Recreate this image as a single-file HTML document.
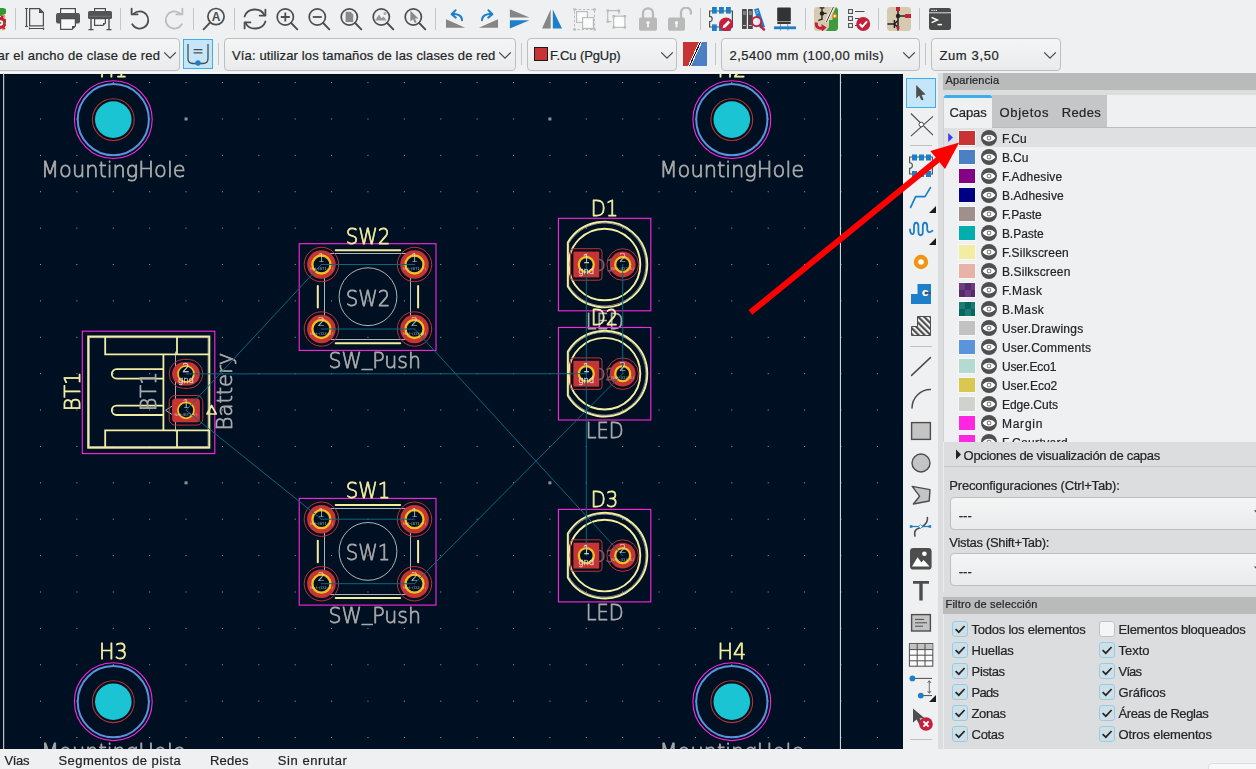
<!DOCTYPE html>
<html lang="es"><head><meta charset="utf-8"><title>Editor de placas</title>
<style>
*{box-sizing:border-box}
html,body{margin:0;padding:0}
body{width:1256px;height:769px;overflow:hidden;position:relative;background:#eff0f1;font-family:"Liberation Sans",sans-serif;font-size:13px;color:#232629}
.abs{position:absolute}
#canvas{position:absolute;left:0;top:73px;width:903px;height:676px;background:#001023;overflow:hidden}
#canvas svg{position:absolute;left:0;top:0;will-change:transform}
.sep{position:absolute;width:1px;background:#c4c6c7}
.combo{position:absolute;height:32px;top:38px;border:1px solid #bcbec0;border-radius:4px;background:linear-gradient(#f4f5f5,#eaebec);white-space:nowrap;overflow:hidden}
.combo span{position:absolute;top:8px;line-height:15px;font-size:13px;white-space:nowrap}
.ico{position:absolute}
.lbl{position:absolute;white-space:nowrap;line-height:15px;-webkit-text-stroke:0.22px #232629}

</style></head><body>
<div class="abs" style="left:0;top:72px;width:903px;height:1px;background:#f7f8f8"></div>
<svg class="ico" style="left:-18px;top:7px" width="24" height="24" viewBox="0 0 24 24"><rect x="-4" y="1" width="28.3" height="21.8" rx="3.2" fill="#f7f7f4"/><path d="M-4 7V4.2Q-4 1 -0.8 1H21.1Q24.3 1 24.3 4.2V6.2Q21 8.4 18 9.2Z" fill="#2f9a36"/><circle cx="21.4" cy="9.6" r="1.5" fill="#fff" stroke="#e39a22" stroke-width="1.1"/><circle cx="18.4" cy="16" r="4.4" fill="none" stroke="#c4203c" stroke-width="3.2"/><circle cx="18.4" cy="16" r="6.4" fill="none" stroke="#c4203c" stroke-width="2.2" stroke-dasharray="2.5 2.5"/><circle cx="18.4" cy="16" r="1.1" fill="#3aa840"/><circle cx="23.4" cy="16.4" r="0.8" fill="#3aa840"/><circle cx="21" cy="22.4" r="1" fill="#f0a020"/></svg>
<svg class="ico" style="left:24px;top:7px" width="24" height="24" viewBox="0 0 24 24"><path d="M1 1.5H4M2.5 1.5V19.5M1 19.5H4M5.5 22.5V20.5M5.5 21.5H19.5M19.5 20.5V23" fill="none" stroke="#4d4d4d" stroke-width="1.2"/><path d="M5.6 1.6H15.5L19.4 5.5V18.9H5.6Z" fill="none" stroke="#4d4d4d" stroke-width="1.2"/><path d="M15 1.6L19.4 6H15Z" fill="#4d4d4d"/></svg>
<svg class="ico" style="left:56px;top:7px" width="24" height="24" viewBox="0 0 24 24"><rect x="4.6" y="1.6" width="14.8" height="6" fill="#f7f7f7" stroke="#4d4d4d" stroke-width="1.2"/><rect x="0" y="6" width="24" height="10.5" rx="2" fill="#555"/><path d="M4.6 11.6H19.4V19L16 22.4H4.6Z" fill="#f7f7f7" stroke="#4d4d4d" stroke-width="1.2"/><path d="M16 22.4V19H19.4Z" fill="#4d4d4d"/></svg>
<svg class="ico" style="left:88px;top:7px" width="24" height="24" viewBox="0 0 24 24"><rect x="6.6" y="1.6" width="10.8" height="5" fill="#f7f7f7" stroke="#4d4d4d" stroke-width="1.2"/><rect x="0" y="4" width="24" height="8" rx="1.5" fill="#555"/><path d="M1.5 9.3H22.5" stroke="#777" stroke-width="0.8"/><path d="M6.6 11.6H17.4V16L15 18.4H6.6Z" fill="#f7f7f7" stroke="#4d4d4d" stroke-width="1.2"/><path d="M15 18.4V16H17.4Z" fill="#4d4d4d"/><path d="M3 12V22.5M21 12V22.5M0.5 22.6H5.5M18.5 22.6H23.5" stroke="#4d4d4d" stroke-width="1.4" fill="none"/></svg>
<svg class="ico" style="left:129px;top:7px" width="24" height="24" viewBox="0 0 24 24"><path d="M3.2 17.2A8.6 8.6 0 1 0 4.6 6.9" fill="none" stroke="#4d4d4d" stroke-width="1.8" stroke-linecap="round"/><path d="M2.6 1.6V7.3H8.6" fill="none" stroke="#4d4d4d" stroke-width="1.8" stroke-linecap="round" stroke-linejoin="round"/></svg>
<svg class="ico" style="left:161px;top:7px" width="24" height="24" viewBox="0 0 24 24"><g transform="translate(24 0) scale(-1 1)"><path d="M3.2 17.2A8.6 8.6 0 1 0 4.6 6.9" fill="none" stroke="#bcbcbc" stroke-width="1.8" stroke-linecap="round"/><path d="M2.6 1.6V7.3H8.6" fill="none" stroke="#bcbcbc" stroke-width="1.8" stroke-linecap="round" stroke-linejoin="round"/></g></svg>
<svg class="ico" style="left:202px;top:7px" width="24" height="24" viewBox="0 0 24 24"><circle cx="14" cy="9.6" r="8.1" fill="none" stroke="#4d4d4d" stroke-width="1.7"/><path d="M8 15.7L1.6 22.3" stroke="#4d4d4d" stroke-width="1.9" stroke-linecap="round"/><text x="14" y="14" font-size="12" font-weight="bold" text-anchor="middle" fill="#4d4d4d" font-family="Liberation Sans,sans-serif">A</text></svg>
<svg class="ico" style="left:243px;top:7px" width="24" height="24" viewBox="0 0 24 24"><path d="M1.6 9.5A10.6 9.6 0 0 1 21.5 8.2" fill="none" stroke="#4d4d4d" stroke-width="1.8" stroke-linecap="round"/><path d="M22.4 2.6V8.6H16.6" fill="none" stroke="#4d4d4d" stroke-width="1.8" stroke-linecap="round" stroke-linejoin="round"/><path d="M22.4 14.5A10.6 9.6 0 0 1 2.5 15.8" fill="none" stroke="#4d4d4d" stroke-width="1.8" stroke-linecap="round"/><path d="M1.6 21.4V15.4H7.4" fill="none" stroke="#4d4d4d" stroke-width="1.8" stroke-linecap="round" stroke-linejoin="round"/></svg>
<svg class="ico" style="left:275px;top:7px" width="24" height="24" viewBox="0 0 24 24"><circle cx="10.3" cy="10" r="8.1" fill="none" stroke="#4d4d4d" stroke-width="1.7"/><path d="M16.2 16L22.3 22.3" stroke="#4d4d4d" stroke-width="1.9" stroke-linecap="round"/><path d="M5.8 10H14.8M10.3 5.5V14.5" stroke="#4d4d4d" stroke-width="1.8"/></svg>
<svg class="ico" style="left:307px;top:7px" width="24" height="24" viewBox="0 0 24 24"><circle cx="10.3" cy="10" r="8.1" fill="none" stroke="#4d4d4d" stroke-width="1.7"/><path d="M16.2 16L22.3 22.3" stroke="#4d4d4d" stroke-width="1.9" stroke-linecap="round"/><path d="M5.8 10H14.8" stroke="#4d4d4d" stroke-width="1.8"/></svg>
<svg class="ico" style="left:339px;top:7px" width="24" height="24" viewBox="0 0 24 24"><circle cx="10.3" cy="10" r="8.1" fill="none" stroke="#4d4d4d" stroke-width="1.7"/><path d="M16.2 16L22.3 22.3" stroke="#4d4d4d" stroke-width="1.9" stroke-linecap="round"/><path d="M6.6 4.8H11.6L14.2 7.4V15H6.6Z" fill="#8a8a8a"/></svg>
<svg class="ico" style="left:371px;top:7px" width="24" height="24" viewBox="0 0 24 24"><circle cx="10.3" cy="10" r="8.1" fill="none" stroke="#4d4d4d" stroke-width="1.7"/><path d="M16.2 16L22.3 22.3" stroke="#4d4d4d" stroke-width="1.9" stroke-linecap="round"/><path d="M4 13.6L8 7.6L10.6 11.2L12.6 9.6L15.6 13.6Z" fill="#999"/><circle cx="14" cy="6.4" r="1.5" fill="#aaa"/></svg>
<svg class="ico" style="left:403px;top:7px" width="24" height="24" viewBox="0 0 24 24"><circle cx="10.3" cy="10" r="8.1" fill="none" stroke="#4d4d4d" stroke-width="1.7"/><path d="M16.2 16L22.3 22.3" stroke="#4d4d4d" stroke-width="1.9" stroke-linecap="round"/><path d="M7.4 3.6V14.6L10 12.2L11.8 16L13.6 15.2L11.9 11.5H15.4Z" fill="#8a8a8a"/></svg>
<svg class="ico" style="left:444px;top:7px" width="24" height="24" viewBox="0 0 24 24"><path d="M2 12.2V20.8H21.2Z" fill="#858585"/><path d="M18 13.2C18 9 14 6.6 9 7" fill="none" stroke="#1d7fc9" stroke-width="2" stroke-linecap="round"/><path d="M11.6 3.2L7.6 7.2L11.8 10.6" fill="none" stroke="#1d7fc9" stroke-width="2" stroke-linecap="round" stroke-linejoin="round"/></svg>
<svg class="ico" style="left:476px;top:7px" width="24" height="24" viewBox="0 0 24 24"><g transform="translate(24 0) scale(-1 1)"><path d="M2 12.2V20.8H21.2Z" fill="#858585"/><path d="M18 13.2C18 9 14 6.6 9 7" fill="none" stroke="#1d7fc9" stroke-width="2" stroke-linecap="round"/><path d="M11.6 3.2L7.6 7.2L11.8 10.6" fill="none" stroke="#1d7fc9" stroke-width="2" stroke-linecap="round" stroke-linejoin="round"/></g></svg>
<svg class="ico" style="left:508px;top:7px" width="24" height="24" viewBox="0 0 24 24"><path d="M1.9 2.3V10.6H21.5Z" fill="#858585"/><path d="M1.9 13.2H21.5L1.9 21.5Z" fill="#1d7fc9"/></svg>
<svg class="ico" style="left:540px;top:7px" width="24" height="24" viewBox="0 0 24 24"><path d="M10.7 2.5V21.5H2Z" fill="#858585"/><path d="M12.8 2.5V21.5H22Z" fill="#1d7fc9"/></svg>
<svg class="ico" style="left:572px;top:7px" width="24" height="24" viewBox="0 0 24 24"><rect x="2.5" y="2.5" width="20" height="20" fill="none" stroke="#bcbcbc" stroke-width="1" stroke-dasharray="2.5 1.7"/><rect x="1.3" y="1.3" width="2.4" height="2.4" fill="#b9b9b9"/><rect x="21.3" y="1.3" width="2.4" height="2.4" fill="#b9b9b9"/><rect x="1.3" y="21.3" width="2.4" height="2.4" fill="#b9b9b9"/><rect x="21.3" y="21.3" width="2.4" height="2.4" fill="#b9b9b9"/><rect x="4.6" y="4.6" width="10.8" height="10.8" fill="#fafafa" stroke="#bcbcbc" stroke-width="1.2"/><rect x="10.6" y="10.6" width="10.8" height="10.8" fill="#fcfcfc" stroke="#bcbcbc" stroke-width="1.2"/></svg>
<svg class="ico" style="left:604px;top:7px" width="24" height="24" viewBox="0 0 24 24"><path d="M14.9 7V3.6H3.7V14.6H7.5" fill="none" stroke="#bcbcbc" stroke-width="1.2"/><rect x="9.7" y="9.2" width="11.2" height="11.2" fill="#fcfcfc" stroke="#bcbcbc" stroke-width="1.2"/><rect x="2.5" y="2.4000000000000004" width="2.4" height="2.4" fill="#b9b9b9"/><rect x="13.700000000000001" y="2.4000000000000004" width="2.4" height="2.4" fill="#b9b9b9"/><rect x="2.5" y="13.4" width="2.4" height="2.4" fill="#b9b9b9"/><rect x="8.5" y="7.999999999999999" width="2.4" height="2.4" fill="#b9b9b9"/><rect x="19.7" y="7.999999999999999" width="2.4" height="2.4" fill="#b9b9b9"/><rect x="8.5" y="19.2" width="2.4" height="2.4" fill="#b9b9b9"/><rect x="19.7" y="19.2" width="2.4" height="2.4" fill="#b9b9b9"/></svg>
<svg class="ico" style="left:636px;top:7px" width="24" height="24" viewBox="0 0 24 24"><path d="M7 11V6.3A5 5 0 0 1 17 6.3V11" fill="none" stroke="#b9b9b9" stroke-width="2.3"/><rect x="3" y="10.4" width="18" height="13.4" rx="1.8" fill="#b9b9b9"/><circle cx="12" cy="15.8" r="1.7" fill="#f4f4f4"/><rect x="11.1" y="16" width="1.8" height="4.4" fill="#f4f4f4"/></svg>
<svg class="ico" style="left:668px;top:7px" width="24" height="24" viewBox="0 0 24 24"><path d="M13 11V5.7A5 5 0 0 1 23 5.7V7.4" fill="none" stroke="#b9b9b9" stroke-width="2.3"/><rect x="0" y="10.4" width="17" height="13.4" rx="1.8" fill="#b9b9b9"/><circle cx="8.5" cy="15.8" r="1.7" fill="#f4f4f4"/><rect x="7.6" y="16" width="1.8" height="4.4" fill="#f4f4f4"/></svg>
<svg class="ico" style="left:709px;top:7px" width="24" height="24" viewBox="0 0 24 24"><path d="M0.6 4H23.4V20H0.6V14.6A2.6 2.6 0 0 0 0.6 9.4Z" fill="none" stroke="#4d4d4d" stroke-width="1.2"/><rect x="3" y="0" width="4.8" height="6.6" fill="#1d7fc9"/><rect x="3" y="17.4" width="4.8" height="6.6" fill="#1d7fc9"/><rect x="10" y="0" width="4.8" height="6.6" fill="#1d7fc9"/><rect x="10" y="17.4" width="4.8" height="6.6" fill="#1d7fc9"/><rect x="17" y="0" width="4.8" height="6.6" fill="#1d7fc9"/><rect x="17" y="17.4" width="4.8" height="6.6" fill="#1d7fc9"/><circle cx="17" cy="17.4" r="7" fill="#c4203c"/><path d="M13.6 21.2L14.4 18.4L19.4 13.4L21.4 15.4L16.4 20.4Z" fill="#fff"/></svg>
<svg class="ico" style="left:742px;top:7px" width="24" height="24" viewBox="0 0 24 24"><rect x="0" y="2" width="4.8" height="20" rx="0.6" fill="#4a4a4a"/><rect x="6" y="2" width="4.8" height="20" rx="0.6" fill="#4a4a4a"/><path d="M1 5H3.8M1 7H3.8M1 18.5H3.8M7 5H9.8M7 7H9.8M7 18.5H9.8" stroke="#ddd" stroke-width="0.8"/><path d="M12 2.2L16.6 1L23 20L18 21.4Z" fill="#1d7fc9"/><path d="M13.6 4.2L16 3.6M14.2 6.2L16.6 5.6" stroke="#cfe4f5" stroke-width="0.8"/><circle cx="14.6" cy="14.6" r="4.6" fill="#e6f1fa" fill-opacity="0.9" stroke="#c4203c" stroke-width="1.9"/><path d="M18 18.4L22 22.6" stroke="#c4203c" stroke-width="2.4" stroke-linecap="round"/></svg>
<svg class="ico" style="left:773px;top:7px" width="24" height="24" viewBox="0 0 24 24"><path d="M5.2 0.4H16.8Q17.8 0.4 17.8 1.6V14H4.2V1.6Q4.2 0.4 5.2 0.4Z" fill="#333"/><rect x="4.2" y="14.6" width="13.6" height="2.4" rx="0.8" fill="#3a3a3a"/><path d="M7.4 17V23.6M14.8 17V23.6" stroke="#888" stroke-width="0.9"/><rect x="1" y="19.4" width="22" height="2.8" fill="#1d7fc9"/></svg>
<svg class="ico" style="left:814px;top:7px" width="24" height="24" viewBox="0 0 24 24"><rect x="0" y="0" width="24" height="24" rx="3.4" fill="#d6c9ae"/><path d="M12 24H20.6Q24 24 24 20.6V3.4Q24 1 22 0.3L18.5 7.5V13H15V20Z" fill="#3d9a3f"/><path d="M19.4 0L12.4 15" stroke="#fff" stroke-width="2.6"/><path d="M19.4 0L12.4 15" stroke="#222" stroke-width="0.9"/><circle cx="8" cy="6.4" r="2.2" fill="#222"/><path d="M8 0.4V13M5.6 0.8H10.4M8 6.4H12.4M8 12L4.4 13.6" stroke="#222" stroke-width="1.3" fill="none"/><circle cx="20.6" cy="9" r="1.8" fill="#fff" stroke="#ec8b12" stroke-width="1.4"/><path d="M2.4 15.4C1.6 20.6 5 21.6 8.6 21" fill="none" stroke="#c4203c" stroke-width="3"/><path d="M7.4 17L12.6 20.6L8 24.4Z" fill="#c4203c"/></svg>
<svg class="ico" style="left:847px;top:7px" width="24" height="24" viewBox="0 0 24 24"><rect x="1.6" y="2.6" width="3.8" height="3.8" fill="#fff" stroke="#4d4d4d" stroke-width="1.1"/><rect x="1.6" y="9.6" width="3.8" height="3.8" fill="#fff" stroke="#4d4d4d" stroke-width="1.1"/><rect x="1.6" y="16.6" width="3.8" height="3.8" fill="#fff" stroke="#4d4d4d" stroke-width="1.1"/><path d="M8 4.5H17.5M8 11.5H12M8 18.5H10" stroke="#4d4d4d" stroke-width="1.1"/><circle cx="16.2" cy="17" r="7" fill="#c4203c"/><path d="M12.6 17L15.2 19.8L20 14.4" fill="none" stroke="#fff" stroke-width="2"/></svg>
<svg class="ico" style="left:887px;top:7px" width="24" height="24" viewBox="0 0 24 24"><rect x="0" y="0" width="24" height="24" rx="3.4" fill="#d6c9ae"/><path d="M11 0.6V23.6M0.4 17H7.4M7.4 13V21M7.4 17L11 13.5M7.4 17L11 20.4M11 9H18" stroke="#222" stroke-width="1.5" fill="none"/><circle cx="11" cy="9" r="2.2" fill="#222"/><rect x="9" y="0" width="4" height="4" fill="#c4203c"/><rect x="18" y="7" width="6" height="4" fill="#c4203c"/><rect x="9.6" y="19" width="2.8" height="3" fill="#c4203c"/></svg>
<svg class="ico" style="left:928px;top:7px" width="24" height="24" viewBox="0 0 24 24"><rect x="1" y="1" width="22" height="22" rx="2.2" fill="#4a4a4a"/><path d="M1 5.8H23" stroke="#efefef" stroke-width="0.9"/><path d="M3.4 3.4H4.6M5.6 3.4H6.8M7.8 3.4H9" stroke="#efefef" stroke-width="1.1"/><path d="M3.6 10.4L9.4 13L3.6 15.6" fill="none" stroke="#fff" stroke-width="1.5"/><path d="M9.6 17.6H14" stroke="#fff" stroke-width="1.5"/></svg>
<div class="sep" style="left:15px;top:8px;height:22px"></div>
<div class="sep" style="left:120px;top:8px;height:22px"></div>
<div class="sep" style="left:193px;top:8px;height:22px"></div>
<div class="sep" style="left:234px;top:8px;height:22px"></div>
<div class="sep" style="left:435px;top:8px;height:22px"></div>
<div class="sep" style="left:700px;top:8px;height:22px"></div>
<div class="sep" style="left:805px;top:8px;height:22px"></div>
<div class="sep" style="left:878px;top:8px;height:22px"></div>
<div class="sep" style="left:919px;top:8px;height:22px"></div>
<div class="combo" style="left:-40px;top:38px;width:220.4px;height:33px"></div><div class="lbl" style="left:-67.47px;top:47.80px;font-size:13px;line-height:16px;letter-spacing:0.219px;">Pista: utilizar el ancho de clase de red</div><svg class="ico" style="left:162.9px;top:51px" width="14" height="9" viewBox="0 0 14 9"><path d="M1.2 1.4L7 7.2L12.8 1.4" fill="none" stroke="#4a4d50" stroke-width="1.3"/></svg>
<div class="abs" style="left:183px;top:39px;width:30px;height:30px;background:#c5e6f8;border:1px solid #3daee9"></div>
<svg class="ico" style="left:186px;top:42px" width="24" height="24" viewBox="0 0 24 24"><path d="M2 2V16.5Q2 21.5 7 21.5H17Q22 21.5 22 16.5V2" fill="none" stroke="#4d4d4d" stroke-width="1.3"/><path d="M7.6 7.6H16.4M7.6 10.8H16.4" stroke="#4d4d4d" stroke-width="1.2"/><circle cx="12" cy="21" r="2.7" fill="#1d7fc9"/></svg>
<div class="sep" style="left:218px;top:43px;height:22px"></div>
<div class="combo" style="left:224.2px;top:38px;width:291.4px;height:33px"></div><div class="lbl" style="left:232.02px;top:47.80px;font-size:13px;line-height:16px;letter-spacing:0.135px;">Vía: utilizar los tamaños de las clases de red</div><svg class="ico" style="left:498.0999999999999px;top:51px" width="14" height="9" viewBox="0 0 14 9"><path d="M1.2 1.4L7 7.2L12.8 1.4" fill="none" stroke="#4a4d50" stroke-width="1.3"/></svg>
<div class="sep" style="left:521px;top:43px;height:22px"></div>
<div class="combo" style="left:527.2px;top:38px;width:150.2px;height:33px"><i style="position:absolute;left:5.6px;top:7.6px;width:14.6px;height:14.6px;background:#c83434;border:1px solid #1b1b1b"></i></div><div class="lbl" style="left:550.02px;top:47.80px;font-size:13px;line-height:16px;letter-spacing:-0.090px;">F.Cu (PgUp)</div><svg class="ico" style="left:659.9000000000001px;top:51px" width="14" height="9" viewBox="0 0 14 9"><path d="M1.2 1.4L7 7.2L12.8 1.4" fill="none" stroke="#4a4d50" stroke-width="1.3"/></svg>
<svg class="ico" style="left:683px;top:42px" width="24" height="24" viewBox="0 0 24 24"><g shape-rendering="crispEdges"><rect width="24" height="24" fill="#c83434"/><path d="M24 0V24H6.5L17.5 0Z" fill="#4d7fc4"/><path d="M17.5 0L6.5 24" stroke="#f4f4f4" stroke-width="3"/><path d="M17.5 0L6.5 24" stroke="#1a1a1a" stroke-width="1"/></g></svg>
<div class="sep" style="left:715px;top:43px;height:22px"></div>
<div class="combo" style="left:721px;top:38px;width:198.6px;height:33px"></div><div class="lbl" style="left:729.52px;top:47.80px;font-size:13px;line-height:16px;letter-spacing:0.466px;">2,5400 mm (100,00 mils)</div><svg class="ico" style="left:902.1px;top:51px" width="14" height="9" viewBox="0 0 14 9"><path d="M1.2 1.4L7 7.2L12.8 1.4" fill="none" stroke="#4a4d50" stroke-width="1.3"/></svg>
<div class="sep" style="left:925px;top:43px;height:22px"></div>
<div class="combo" style="left:931.2px;top:38px;width:129.6px;height:33px"></div><div class="lbl" style="left:939.42px;top:47.80px;font-size:13px;line-height:16px;letter-spacing:0.644px;">Zum 3,50</div><svg class="ico" style="left:1043.3px;top:51px" width="14" height="9" viewBox="0 0 14 9"><path d="M1.2 1.4L7 7.2L12.8 1.4" fill="none" stroke="#4a4d50" stroke-width="1.3"/></svg>
<div id="canvas"><svg width="903" height="769" viewBox="0 0 903 769" style="top:-73px" font-family='"DejaVu Sans","Liberation Sans",sans-serif'>
<rect x="0" y="73" width="903" height="1" fill="#eff0f1"/><rect x="0" y="74" width="903" height="1" fill="#000a1a"/>
<g><rect x="40.00" y="82.10" width="1" height="1" fill="#a4a6a8"/><rect x="40.00" y="118.48" width="1" height="1" fill="#a4a6a8"/><rect x="40.00" y="154.87" width="1" height="1" fill="#a4a6a8"/><rect x="40.00" y="191.25" width="1" height="1" fill="#a4a6a8"/><rect x="40.00" y="227.64" width="1" height="1" fill="#a4a6a8"/><rect x="40.00" y="264.02" width="1" height="1" fill="#a4a6a8"/><rect x="40.00" y="300.41" width="1" height="1" fill="#a4a6a8"/><rect x="40.00" y="336.79" width="1" height="1" fill="#a4a6a8"/><rect x="40.00" y="373.18" width="1" height="1" fill="#a4a6a8"/><rect x="40.00" y="409.56" width="1" height="1" fill="#a4a6a8"/><rect x="40.00" y="445.95" width="1" height="1" fill="#a4a6a8"/><rect x="40.00" y="482.33" width="1" height="1" fill="#a4a6a8"/><rect x="40.00" y="518.72" width="1" height="1" fill="#a4a6a8"/><rect x="40.00" y="555.11" width="1" height="1" fill="#a4a6a8"/><rect x="40.00" y="591.49" width="1" height="1" fill="#a4a6a8"/><rect x="40.00" y="627.88" width="1" height="1" fill="#a4a6a8"/><rect x="40.00" y="664.26" width="1" height="1" fill="#a4a6a8"/><rect x="40.00" y="700.64" width="1" height="1" fill="#a4a6a8"/><rect x="40.00" y="737.03" width="1" height="1" fill="#a4a6a8"/><rect x="76.38" y="82.10" width="1" height="1" fill="#a4a6a8"/><rect x="76.38" y="118.48" width="1" height="1" fill="#a4a6a8"/><rect x="76.38" y="154.87" width="1" height="1" fill="#a4a6a8"/><rect x="76.38" y="191.25" width="1" height="1" fill="#a4a6a8"/><rect x="76.38" y="227.64" width="1" height="1" fill="#a4a6a8"/><rect x="76.38" y="264.02" width="1" height="1" fill="#a4a6a8"/><rect x="76.38" y="300.41" width="1" height="1" fill="#a4a6a8"/><rect x="76.38" y="336.79" width="1" height="1" fill="#a4a6a8"/><rect x="76.38" y="373.18" width="1" height="1" fill="#a4a6a8"/><rect x="76.38" y="409.56" width="1" height="1" fill="#a4a6a8"/><rect x="76.38" y="445.95" width="1" height="1" fill="#a4a6a8"/><rect x="76.38" y="482.33" width="1" height="1" fill="#a4a6a8"/><rect x="76.38" y="518.72" width="1" height="1" fill="#a4a6a8"/><rect x="76.38" y="555.11" width="1" height="1" fill="#a4a6a8"/><rect x="76.38" y="591.49" width="1" height="1" fill="#a4a6a8"/><rect x="76.38" y="627.88" width="1" height="1" fill="#a4a6a8"/><rect x="76.38" y="664.26" width="1" height="1" fill="#a4a6a8"/><rect x="76.38" y="700.64" width="1" height="1" fill="#a4a6a8"/><rect x="76.38" y="737.03" width="1" height="1" fill="#a4a6a8"/><rect x="112.77" y="82.10" width="1" height="1" fill="#a4a6a8"/><rect x="112.77" y="118.48" width="1" height="1" fill="#a4a6a8"/><rect x="112.77" y="154.87" width="1" height="1" fill="#a4a6a8"/><rect x="112.77" y="191.25" width="1" height="1" fill="#a4a6a8"/><rect x="112.77" y="227.64" width="1" height="1" fill="#a4a6a8"/><rect x="112.77" y="264.02" width="1" height="1" fill="#a4a6a8"/><rect x="112.77" y="300.41" width="1" height="1" fill="#a4a6a8"/><rect x="112.77" y="336.79" width="1" height="1" fill="#a4a6a8"/><rect x="112.77" y="373.18" width="1" height="1" fill="#a4a6a8"/><rect x="112.77" y="409.56" width="1" height="1" fill="#a4a6a8"/><rect x="112.77" y="445.95" width="1" height="1" fill="#a4a6a8"/><rect x="112.77" y="482.33" width="1" height="1" fill="#a4a6a8"/><rect x="112.77" y="518.72" width="1" height="1" fill="#a4a6a8"/><rect x="112.77" y="555.11" width="1" height="1" fill="#a4a6a8"/><rect x="112.77" y="591.49" width="1" height="1" fill="#a4a6a8"/><rect x="112.77" y="627.88" width="1" height="1" fill="#a4a6a8"/><rect x="112.77" y="664.26" width="1" height="1" fill="#a4a6a8"/><rect x="112.77" y="700.64" width="1" height="1" fill="#a4a6a8"/><rect x="112.77" y="737.03" width="1" height="1" fill="#a4a6a8"/><rect x="149.16" y="82.10" width="1" height="1" fill="#a4a6a8"/><rect x="149.16" y="118.48" width="1" height="1" fill="#a4a6a8"/><rect x="149.16" y="154.87" width="1" height="1" fill="#a4a6a8"/><rect x="149.16" y="191.25" width="1" height="1" fill="#a4a6a8"/><rect x="149.16" y="227.64" width="1" height="1" fill="#a4a6a8"/><rect x="149.16" y="264.02" width="1" height="1" fill="#a4a6a8"/><rect x="149.16" y="300.41" width="1" height="1" fill="#a4a6a8"/><rect x="149.16" y="336.79" width="1" height="1" fill="#a4a6a8"/><rect x="149.16" y="373.18" width="1" height="1" fill="#a4a6a8"/><rect x="149.16" y="409.56" width="1" height="1" fill="#a4a6a8"/><rect x="149.16" y="445.95" width="1" height="1" fill="#a4a6a8"/><rect x="149.16" y="482.33" width="1" height="1" fill="#a4a6a8"/><rect x="149.16" y="518.72" width="1" height="1" fill="#a4a6a8"/><rect x="149.16" y="555.11" width="1" height="1" fill="#a4a6a8"/><rect x="149.16" y="591.49" width="1" height="1" fill="#a4a6a8"/><rect x="149.16" y="627.88" width="1" height="1" fill="#a4a6a8"/><rect x="149.16" y="664.26" width="1" height="1" fill="#a4a6a8"/><rect x="149.16" y="700.64" width="1" height="1" fill="#a4a6a8"/><rect x="149.16" y="737.03" width="1" height="1" fill="#a4a6a8"/><rect x="185.54" y="82.10" width="1" height="1" fill="#a4a6a8"/><rect x="184.54" y="117.48" width="3" height="3" fill="#8f9194"/><rect x="185.54" y="154.87" width="1" height="1" fill="#a4a6a8"/><rect x="185.54" y="191.25" width="1" height="1" fill="#a4a6a8"/><rect x="185.54" y="227.64" width="1" height="1" fill="#a4a6a8"/><rect x="185.54" y="264.02" width="1" height="1" fill="#a4a6a8"/><rect x="185.54" y="300.41" width="1" height="1" fill="#a4a6a8"/><rect x="185.54" y="336.79" width="1" height="1" fill="#a4a6a8"/><rect x="185.54" y="373.18" width="1" height="1" fill="#a4a6a8"/><rect x="185.54" y="409.56" width="1" height="1" fill="#a4a6a8"/><rect x="185.54" y="445.95" width="1" height="1" fill="#a4a6a8"/><rect x="184.54" y="481.33" width="3" height="3" fill="#8f9194"/><rect x="185.54" y="518.72" width="1" height="1" fill="#a4a6a8"/><rect x="185.54" y="555.11" width="1" height="1" fill="#a4a6a8"/><rect x="185.54" y="591.49" width="1" height="1" fill="#a4a6a8"/><rect x="185.54" y="627.88" width="1" height="1" fill="#a4a6a8"/><rect x="185.54" y="664.26" width="1" height="1" fill="#a4a6a8"/><rect x="185.54" y="700.64" width="1" height="1" fill="#a4a6a8"/><rect x="185.54" y="737.03" width="1" height="1" fill="#a4a6a8"/><rect x="221.92" y="82.10" width="1" height="1" fill="#a4a6a8"/><rect x="221.92" y="118.48" width="1" height="1" fill="#a4a6a8"/><rect x="221.92" y="154.87" width="1" height="1" fill="#a4a6a8"/><rect x="221.92" y="191.25" width="1" height="1" fill="#a4a6a8"/><rect x="221.92" y="227.64" width="1" height="1" fill="#a4a6a8"/><rect x="221.92" y="264.02" width="1" height="1" fill="#a4a6a8"/><rect x="221.92" y="300.41" width="1" height="1" fill="#a4a6a8"/><rect x="221.92" y="336.79" width="1" height="1" fill="#a4a6a8"/><rect x="221.92" y="373.18" width="1" height="1" fill="#a4a6a8"/><rect x="221.92" y="409.56" width="1" height="1" fill="#a4a6a8"/><rect x="221.92" y="445.95" width="1" height="1" fill="#a4a6a8"/><rect x="221.92" y="482.33" width="1" height="1" fill="#a4a6a8"/><rect x="221.92" y="518.72" width="1" height="1" fill="#a4a6a8"/><rect x="221.92" y="555.11" width="1" height="1" fill="#a4a6a8"/><rect x="221.92" y="591.49" width="1" height="1" fill="#a4a6a8"/><rect x="221.92" y="627.88" width="1" height="1" fill="#a4a6a8"/><rect x="221.92" y="664.26" width="1" height="1" fill="#a4a6a8"/><rect x="221.92" y="700.64" width="1" height="1" fill="#a4a6a8"/><rect x="221.92" y="737.03" width="1" height="1" fill="#a4a6a8"/><rect x="258.31" y="82.10" width="1" height="1" fill="#a4a6a8"/><rect x="258.31" y="118.48" width="1" height="1" fill="#a4a6a8"/><rect x="258.31" y="154.87" width="1" height="1" fill="#a4a6a8"/><rect x="258.31" y="191.25" width="1" height="1" fill="#a4a6a8"/><rect x="258.31" y="227.64" width="1" height="1" fill="#a4a6a8"/><rect x="258.31" y="264.02" width="1" height="1" fill="#a4a6a8"/><rect x="258.31" y="300.41" width="1" height="1" fill="#a4a6a8"/><rect x="258.31" y="336.79" width="1" height="1" fill="#a4a6a8"/><rect x="258.31" y="373.18" width="1" height="1" fill="#a4a6a8"/><rect x="258.31" y="409.56" width="1" height="1" fill="#a4a6a8"/><rect x="258.31" y="445.95" width="1" height="1" fill="#a4a6a8"/><rect x="258.31" y="482.33" width="1" height="1" fill="#a4a6a8"/><rect x="258.31" y="518.72" width="1" height="1" fill="#a4a6a8"/><rect x="258.31" y="555.11" width="1" height="1" fill="#a4a6a8"/><rect x="258.31" y="591.49" width="1" height="1" fill="#a4a6a8"/><rect x="258.31" y="627.88" width="1" height="1" fill="#a4a6a8"/><rect x="258.31" y="664.26" width="1" height="1" fill="#a4a6a8"/><rect x="258.31" y="700.64" width="1" height="1" fill="#a4a6a8"/><rect x="258.31" y="737.03" width="1" height="1" fill="#a4a6a8"/><rect x="294.69" y="82.10" width="1" height="1" fill="#a4a6a8"/><rect x="294.69" y="118.48" width="1" height="1" fill="#a4a6a8"/><rect x="294.69" y="154.87" width="1" height="1" fill="#a4a6a8"/><rect x="294.69" y="191.25" width="1" height="1" fill="#a4a6a8"/><rect x="294.69" y="227.64" width="1" height="1" fill="#a4a6a8"/><rect x="294.69" y="264.02" width="1" height="1" fill="#a4a6a8"/><rect x="294.69" y="300.41" width="1" height="1" fill="#a4a6a8"/><rect x="294.69" y="336.79" width="1" height="1" fill="#a4a6a8"/><rect x="294.69" y="373.18" width="1" height="1" fill="#a4a6a8"/><rect x="294.69" y="409.56" width="1" height="1" fill="#a4a6a8"/><rect x="294.69" y="445.95" width="1" height="1" fill="#a4a6a8"/><rect x="294.69" y="482.33" width="1" height="1" fill="#a4a6a8"/><rect x="294.69" y="518.72" width="1" height="1" fill="#a4a6a8"/><rect x="294.69" y="555.11" width="1" height="1" fill="#a4a6a8"/><rect x="294.69" y="591.49" width="1" height="1" fill="#a4a6a8"/><rect x="294.69" y="627.88" width="1" height="1" fill="#a4a6a8"/><rect x="294.69" y="664.26" width="1" height="1" fill="#a4a6a8"/><rect x="294.69" y="700.64" width="1" height="1" fill="#a4a6a8"/><rect x="294.69" y="737.03" width="1" height="1" fill="#a4a6a8"/><rect x="331.08" y="82.10" width="1" height="1" fill="#a4a6a8"/><rect x="331.08" y="118.48" width="1" height="1" fill="#a4a6a8"/><rect x="331.08" y="154.87" width="1" height="1" fill="#a4a6a8"/><rect x="331.08" y="191.25" width="1" height="1" fill="#a4a6a8"/><rect x="331.08" y="227.64" width="1" height="1" fill="#a4a6a8"/><rect x="331.08" y="264.02" width="1" height="1" fill="#a4a6a8"/><rect x="331.08" y="300.41" width="1" height="1" fill="#a4a6a8"/><rect x="331.08" y="336.79" width="1" height="1" fill="#a4a6a8"/><rect x="331.08" y="373.18" width="1" height="1" fill="#a4a6a8"/><rect x="331.08" y="409.56" width="1" height="1" fill="#a4a6a8"/><rect x="331.08" y="445.95" width="1" height="1" fill="#a4a6a8"/><rect x="331.08" y="482.33" width="1" height="1" fill="#a4a6a8"/><rect x="331.08" y="518.72" width="1" height="1" fill="#a4a6a8"/><rect x="331.08" y="555.11" width="1" height="1" fill="#a4a6a8"/><rect x="331.08" y="591.49" width="1" height="1" fill="#a4a6a8"/><rect x="331.08" y="627.88" width="1" height="1" fill="#a4a6a8"/><rect x="331.08" y="664.26" width="1" height="1" fill="#a4a6a8"/><rect x="331.08" y="700.64" width="1" height="1" fill="#a4a6a8"/><rect x="331.08" y="737.03" width="1" height="1" fill="#a4a6a8"/><rect x="367.46" y="82.10" width="1" height="1" fill="#a4a6a8"/><rect x="367.46" y="118.48" width="1" height="1" fill="#a4a6a8"/><rect x="367.46" y="154.87" width="1" height="1" fill="#a4a6a8"/><rect x="367.46" y="191.25" width="1" height="1" fill="#a4a6a8"/><rect x="367.46" y="227.64" width="1" height="1" fill="#a4a6a8"/><rect x="367.46" y="264.02" width="1" height="1" fill="#a4a6a8"/><rect x="367.46" y="300.41" width="1" height="1" fill="#a4a6a8"/><rect x="367.46" y="336.79" width="1" height="1" fill="#a4a6a8"/><rect x="367.46" y="373.18" width="1" height="1" fill="#a4a6a8"/><rect x="367.46" y="409.56" width="1" height="1" fill="#a4a6a8"/><rect x="367.46" y="445.95" width="1" height="1" fill="#a4a6a8"/><rect x="367.46" y="482.33" width="1" height="1" fill="#a4a6a8"/><rect x="367.46" y="518.72" width="1" height="1" fill="#a4a6a8"/><rect x="367.46" y="555.11" width="1" height="1" fill="#a4a6a8"/><rect x="367.46" y="591.49" width="1" height="1" fill="#a4a6a8"/><rect x="367.46" y="627.88" width="1" height="1" fill="#a4a6a8"/><rect x="367.46" y="664.26" width="1" height="1" fill="#a4a6a8"/><rect x="367.46" y="700.64" width="1" height="1" fill="#a4a6a8"/><rect x="367.46" y="737.03" width="1" height="1" fill="#a4a6a8"/><rect x="403.85" y="82.10" width="1" height="1" fill="#a4a6a8"/><rect x="403.85" y="118.48" width="1" height="1" fill="#a4a6a8"/><rect x="403.85" y="154.87" width="1" height="1" fill="#a4a6a8"/><rect x="403.85" y="191.25" width="1" height="1" fill="#a4a6a8"/><rect x="403.85" y="227.64" width="1" height="1" fill="#a4a6a8"/><rect x="403.85" y="264.02" width="1" height="1" fill="#a4a6a8"/><rect x="403.85" y="300.41" width="1" height="1" fill="#a4a6a8"/><rect x="403.85" y="336.79" width="1" height="1" fill="#a4a6a8"/><rect x="403.85" y="373.18" width="1" height="1" fill="#a4a6a8"/><rect x="403.85" y="409.56" width="1" height="1" fill="#a4a6a8"/><rect x="403.85" y="445.95" width="1" height="1" fill="#a4a6a8"/><rect x="403.85" y="482.33" width="1" height="1" fill="#a4a6a8"/><rect x="403.85" y="518.72" width="1" height="1" fill="#a4a6a8"/><rect x="403.85" y="555.11" width="1" height="1" fill="#a4a6a8"/><rect x="403.85" y="591.49" width="1" height="1" fill="#a4a6a8"/><rect x="403.85" y="627.88" width="1" height="1" fill="#a4a6a8"/><rect x="403.85" y="664.26" width="1" height="1" fill="#a4a6a8"/><rect x="403.85" y="700.64" width="1" height="1" fill="#a4a6a8"/><rect x="403.85" y="737.03" width="1" height="1" fill="#a4a6a8"/><rect x="440.23" y="82.10" width="1" height="1" fill="#a4a6a8"/><rect x="440.23" y="118.48" width="1" height="1" fill="#a4a6a8"/><rect x="440.23" y="154.87" width="1" height="1" fill="#a4a6a8"/><rect x="440.23" y="191.25" width="1" height="1" fill="#a4a6a8"/><rect x="440.23" y="227.64" width="1" height="1" fill="#a4a6a8"/><rect x="440.23" y="264.02" width="1" height="1" fill="#a4a6a8"/><rect x="440.23" y="300.41" width="1" height="1" fill="#a4a6a8"/><rect x="440.23" y="336.79" width="1" height="1" fill="#a4a6a8"/><rect x="440.23" y="373.18" width="1" height="1" fill="#a4a6a8"/><rect x="440.23" y="409.56" width="1" height="1" fill="#a4a6a8"/><rect x="440.23" y="445.95" width="1" height="1" fill="#a4a6a8"/><rect x="440.23" y="482.33" width="1" height="1" fill="#a4a6a8"/><rect x="440.23" y="518.72" width="1" height="1" fill="#a4a6a8"/><rect x="440.23" y="555.11" width="1" height="1" fill="#a4a6a8"/><rect x="440.23" y="591.49" width="1" height="1" fill="#a4a6a8"/><rect x="440.23" y="627.88" width="1" height="1" fill="#a4a6a8"/><rect x="440.23" y="664.26" width="1" height="1" fill="#a4a6a8"/><rect x="440.23" y="700.64" width="1" height="1" fill="#a4a6a8"/><rect x="440.23" y="737.03" width="1" height="1" fill="#a4a6a8"/><rect x="476.62" y="82.10" width="1" height="1" fill="#a4a6a8"/><rect x="476.62" y="118.48" width="1" height="1" fill="#a4a6a8"/><rect x="476.62" y="154.87" width="1" height="1" fill="#a4a6a8"/><rect x="476.62" y="191.25" width="1" height="1" fill="#a4a6a8"/><rect x="476.62" y="227.64" width="1" height="1" fill="#a4a6a8"/><rect x="476.62" y="264.02" width="1" height="1" fill="#a4a6a8"/><rect x="476.62" y="300.41" width="1" height="1" fill="#a4a6a8"/><rect x="476.62" y="336.79" width="1" height="1" fill="#a4a6a8"/><rect x="476.62" y="373.18" width="1" height="1" fill="#a4a6a8"/><rect x="476.62" y="409.56" width="1" height="1" fill="#a4a6a8"/><rect x="476.62" y="445.95" width="1" height="1" fill="#a4a6a8"/><rect x="476.62" y="482.33" width="1" height="1" fill="#a4a6a8"/><rect x="476.62" y="518.72" width="1" height="1" fill="#a4a6a8"/><rect x="476.62" y="555.11" width="1" height="1" fill="#a4a6a8"/><rect x="476.62" y="591.49" width="1" height="1" fill="#a4a6a8"/><rect x="476.62" y="627.88" width="1" height="1" fill="#a4a6a8"/><rect x="476.62" y="664.26" width="1" height="1" fill="#a4a6a8"/><rect x="476.62" y="700.64" width="1" height="1" fill="#a4a6a8"/><rect x="476.62" y="737.03" width="1" height="1" fill="#a4a6a8"/><rect x="513.00" y="82.10" width="1" height="1" fill="#a4a6a8"/><rect x="513.00" y="118.48" width="1" height="1" fill="#a4a6a8"/><rect x="513.00" y="154.87" width="1" height="1" fill="#a4a6a8"/><rect x="513.00" y="191.25" width="1" height="1" fill="#a4a6a8"/><rect x="513.00" y="227.64" width="1" height="1" fill="#a4a6a8"/><rect x="513.00" y="264.02" width="1" height="1" fill="#a4a6a8"/><rect x="513.00" y="300.41" width="1" height="1" fill="#a4a6a8"/><rect x="513.00" y="336.79" width="1" height="1" fill="#a4a6a8"/><rect x="513.00" y="373.18" width="1" height="1" fill="#a4a6a8"/><rect x="513.00" y="409.56" width="1" height="1" fill="#a4a6a8"/><rect x="513.00" y="445.95" width="1" height="1" fill="#a4a6a8"/><rect x="513.00" y="482.33" width="1" height="1" fill="#a4a6a8"/><rect x="513.00" y="518.72" width="1" height="1" fill="#a4a6a8"/><rect x="513.00" y="555.11" width="1" height="1" fill="#a4a6a8"/><rect x="513.00" y="591.49" width="1" height="1" fill="#a4a6a8"/><rect x="513.00" y="627.88" width="1" height="1" fill="#a4a6a8"/><rect x="513.00" y="664.26" width="1" height="1" fill="#a4a6a8"/><rect x="513.00" y="700.64" width="1" height="1" fill="#a4a6a8"/><rect x="513.00" y="737.03" width="1" height="1" fill="#a4a6a8"/><rect x="549.39" y="82.10" width="1" height="1" fill="#a4a6a8"/><rect x="548.39" y="117.48" width="3" height="3" fill="#8f9194"/><rect x="549.39" y="154.87" width="1" height="1" fill="#a4a6a8"/><rect x="549.39" y="191.25" width="1" height="1" fill="#a4a6a8"/><rect x="549.39" y="227.64" width="1" height="1" fill="#a4a6a8"/><rect x="549.39" y="264.02" width="1" height="1" fill="#a4a6a8"/><rect x="549.39" y="300.41" width="1" height="1" fill="#a4a6a8"/><rect x="549.39" y="336.79" width="1" height="1" fill="#a4a6a8"/><rect x="549.39" y="373.18" width="1" height="1" fill="#a4a6a8"/><rect x="549.39" y="409.56" width="1" height="1" fill="#a4a6a8"/><rect x="549.39" y="445.95" width="1" height="1" fill="#a4a6a8"/><rect x="548.39" y="481.33" width="3" height="3" fill="#8f9194"/><rect x="549.39" y="518.72" width="1" height="1" fill="#a4a6a8"/><rect x="549.39" y="555.11" width="1" height="1" fill="#a4a6a8"/><rect x="549.39" y="591.49" width="1" height="1" fill="#a4a6a8"/><rect x="549.39" y="627.88" width="1" height="1" fill="#a4a6a8"/><rect x="549.39" y="664.26" width="1" height="1" fill="#a4a6a8"/><rect x="549.39" y="700.64" width="1" height="1" fill="#a4a6a8"/><rect x="549.39" y="737.03" width="1" height="1" fill="#a4a6a8"/><rect x="585.77" y="82.10" width="1" height="1" fill="#a4a6a8"/><rect x="585.77" y="118.48" width="1" height="1" fill="#a4a6a8"/><rect x="585.77" y="154.87" width="1" height="1" fill="#a4a6a8"/><rect x="585.77" y="191.25" width="1" height="1" fill="#a4a6a8"/><rect x="585.77" y="227.64" width="1" height="1" fill="#a4a6a8"/><rect x="585.77" y="264.02" width="1" height="1" fill="#a4a6a8"/><rect x="585.77" y="300.41" width="1" height="1" fill="#a4a6a8"/><rect x="585.77" y="336.79" width="1" height="1" fill="#a4a6a8"/><rect x="585.77" y="373.18" width="1" height="1" fill="#a4a6a8"/><rect x="585.77" y="409.56" width="1" height="1" fill="#a4a6a8"/><rect x="585.77" y="445.95" width="1" height="1" fill="#a4a6a8"/><rect x="585.77" y="482.33" width="1" height="1" fill="#a4a6a8"/><rect x="585.77" y="518.72" width="1" height="1" fill="#a4a6a8"/><rect x="585.77" y="555.11" width="1" height="1" fill="#a4a6a8"/><rect x="585.77" y="591.49" width="1" height="1" fill="#a4a6a8"/><rect x="585.77" y="627.88" width="1" height="1" fill="#a4a6a8"/><rect x="585.77" y="664.26" width="1" height="1" fill="#a4a6a8"/><rect x="585.77" y="700.64" width="1" height="1" fill="#a4a6a8"/><rect x="585.77" y="737.03" width="1" height="1" fill="#a4a6a8"/><rect x="622.16" y="82.10" width="1" height="1" fill="#a4a6a8"/><rect x="622.16" y="118.48" width="1" height="1" fill="#a4a6a8"/><rect x="622.16" y="154.87" width="1" height="1" fill="#a4a6a8"/><rect x="622.16" y="191.25" width="1" height="1" fill="#a4a6a8"/><rect x="622.16" y="227.64" width="1" height="1" fill="#a4a6a8"/><rect x="622.16" y="264.02" width="1" height="1" fill="#a4a6a8"/><rect x="622.16" y="300.41" width="1" height="1" fill="#a4a6a8"/><rect x="622.16" y="336.79" width="1" height="1" fill="#a4a6a8"/><rect x="622.16" y="373.18" width="1" height="1" fill="#a4a6a8"/><rect x="622.16" y="409.56" width="1" height="1" fill="#a4a6a8"/><rect x="622.16" y="445.95" width="1" height="1" fill="#a4a6a8"/><rect x="622.16" y="482.33" width="1" height="1" fill="#a4a6a8"/><rect x="622.16" y="518.72" width="1" height="1" fill="#a4a6a8"/><rect x="622.16" y="555.11" width="1" height="1" fill="#a4a6a8"/><rect x="622.16" y="591.49" width="1" height="1" fill="#a4a6a8"/><rect x="622.16" y="627.88" width="1" height="1" fill="#a4a6a8"/><rect x="622.16" y="664.26" width="1" height="1" fill="#a4a6a8"/><rect x="622.16" y="700.64" width="1" height="1" fill="#a4a6a8"/><rect x="622.16" y="737.03" width="1" height="1" fill="#a4a6a8"/><rect x="658.54" y="82.10" width="1" height="1" fill="#a4a6a8"/><rect x="658.54" y="118.48" width="1" height="1" fill="#a4a6a8"/><rect x="658.54" y="154.87" width="1" height="1" fill="#a4a6a8"/><rect x="658.54" y="191.25" width="1" height="1" fill="#a4a6a8"/><rect x="658.54" y="227.64" width="1" height="1" fill="#a4a6a8"/><rect x="658.54" y="264.02" width="1" height="1" fill="#a4a6a8"/><rect x="658.54" y="300.41" width="1" height="1" fill="#a4a6a8"/><rect x="658.54" y="336.79" width="1" height="1" fill="#a4a6a8"/><rect x="658.54" y="373.18" width="1" height="1" fill="#a4a6a8"/><rect x="658.54" y="409.56" width="1" height="1" fill="#a4a6a8"/><rect x="658.54" y="445.95" width="1" height="1" fill="#a4a6a8"/><rect x="658.54" y="482.33" width="1" height="1" fill="#a4a6a8"/><rect x="658.54" y="518.72" width="1" height="1" fill="#a4a6a8"/><rect x="658.54" y="555.11" width="1" height="1" fill="#a4a6a8"/><rect x="658.54" y="591.49" width="1" height="1" fill="#a4a6a8"/><rect x="658.54" y="627.88" width="1" height="1" fill="#a4a6a8"/><rect x="658.54" y="664.26" width="1" height="1" fill="#a4a6a8"/><rect x="658.54" y="700.64" width="1" height="1" fill="#a4a6a8"/><rect x="658.54" y="737.03" width="1" height="1" fill="#a4a6a8"/><rect x="694.93" y="82.10" width="1" height="1" fill="#a4a6a8"/><rect x="694.93" y="118.48" width="1" height="1" fill="#a4a6a8"/><rect x="694.93" y="154.87" width="1" height="1" fill="#a4a6a8"/><rect x="694.93" y="191.25" width="1" height="1" fill="#a4a6a8"/><rect x="694.93" y="227.64" width="1" height="1" fill="#a4a6a8"/><rect x="694.93" y="264.02" width="1" height="1" fill="#a4a6a8"/><rect x="694.93" y="300.41" width="1" height="1" fill="#a4a6a8"/><rect x="694.93" y="336.79" width="1" height="1" fill="#a4a6a8"/><rect x="694.93" y="373.18" width="1" height="1" fill="#a4a6a8"/><rect x="694.93" y="409.56" width="1" height="1" fill="#a4a6a8"/><rect x="694.93" y="445.95" width="1" height="1" fill="#a4a6a8"/><rect x="694.93" y="482.33" width="1" height="1" fill="#a4a6a8"/><rect x="694.93" y="518.72" width="1" height="1" fill="#a4a6a8"/><rect x="694.93" y="555.11" width="1" height="1" fill="#a4a6a8"/><rect x="694.93" y="591.49" width="1" height="1" fill="#a4a6a8"/><rect x="694.93" y="627.88" width="1" height="1" fill="#a4a6a8"/><rect x="694.93" y="664.26" width="1" height="1" fill="#a4a6a8"/><rect x="694.93" y="700.64" width="1" height="1" fill="#a4a6a8"/><rect x="694.93" y="737.03" width="1" height="1" fill="#a4a6a8"/><rect x="731.31" y="82.10" width="1" height="1" fill="#a4a6a8"/><rect x="731.31" y="118.48" width="1" height="1" fill="#a4a6a8"/><rect x="731.31" y="154.87" width="1" height="1" fill="#a4a6a8"/><rect x="731.31" y="191.25" width="1" height="1" fill="#a4a6a8"/><rect x="731.31" y="227.64" width="1" height="1" fill="#a4a6a8"/><rect x="731.31" y="264.02" width="1" height="1" fill="#a4a6a8"/><rect x="731.31" y="300.41" width="1" height="1" fill="#a4a6a8"/><rect x="731.31" y="336.79" width="1" height="1" fill="#a4a6a8"/><rect x="731.31" y="373.18" width="1" height="1" fill="#a4a6a8"/><rect x="731.31" y="409.56" width="1" height="1" fill="#a4a6a8"/><rect x="731.31" y="445.95" width="1" height="1" fill="#a4a6a8"/><rect x="731.31" y="482.33" width="1" height="1" fill="#a4a6a8"/><rect x="731.31" y="518.72" width="1" height="1" fill="#a4a6a8"/><rect x="731.31" y="555.11" width="1" height="1" fill="#a4a6a8"/><rect x="731.31" y="591.49" width="1" height="1" fill="#a4a6a8"/><rect x="731.31" y="627.88" width="1" height="1" fill="#a4a6a8"/><rect x="731.31" y="664.26" width="1" height="1" fill="#a4a6a8"/><rect x="731.31" y="700.64" width="1" height="1" fill="#a4a6a8"/><rect x="731.31" y="737.03" width="1" height="1" fill="#a4a6a8"/><rect x="767.70" y="82.10" width="1" height="1" fill="#a4a6a8"/><rect x="767.70" y="118.48" width="1" height="1" fill="#a4a6a8"/><rect x="767.70" y="154.87" width="1" height="1" fill="#a4a6a8"/><rect x="767.70" y="191.25" width="1" height="1" fill="#a4a6a8"/><rect x="767.70" y="227.64" width="1" height="1" fill="#a4a6a8"/><rect x="767.70" y="264.02" width="1" height="1" fill="#a4a6a8"/><rect x="767.70" y="300.41" width="1" height="1" fill="#a4a6a8"/><rect x="767.70" y="336.79" width="1" height="1" fill="#a4a6a8"/><rect x="767.70" y="373.18" width="1" height="1" fill="#a4a6a8"/><rect x="767.70" y="409.56" width="1" height="1" fill="#a4a6a8"/><rect x="767.70" y="445.95" width="1" height="1" fill="#a4a6a8"/><rect x="767.70" y="482.33" width="1" height="1" fill="#a4a6a8"/><rect x="767.70" y="518.72" width="1" height="1" fill="#a4a6a8"/><rect x="767.70" y="555.11" width="1" height="1" fill="#a4a6a8"/><rect x="767.70" y="591.49" width="1" height="1" fill="#a4a6a8"/><rect x="767.70" y="627.88" width="1" height="1" fill="#a4a6a8"/><rect x="767.70" y="664.26" width="1" height="1" fill="#a4a6a8"/><rect x="767.70" y="700.64" width="1" height="1" fill="#a4a6a8"/><rect x="767.70" y="737.03" width="1" height="1" fill="#a4a6a8"/><rect x="804.08" y="82.10" width="1" height="1" fill="#a4a6a8"/><rect x="804.08" y="118.48" width="1" height="1" fill="#a4a6a8"/><rect x="804.08" y="154.87" width="1" height="1" fill="#a4a6a8"/><rect x="804.08" y="191.25" width="1" height="1" fill="#a4a6a8"/><rect x="804.08" y="227.64" width="1" height="1" fill="#a4a6a8"/><rect x="804.08" y="264.02" width="1" height="1" fill="#a4a6a8"/><rect x="804.08" y="300.41" width="1" height="1" fill="#a4a6a8"/><rect x="804.08" y="336.79" width="1" height="1" fill="#a4a6a8"/><rect x="804.08" y="373.18" width="1" height="1" fill="#a4a6a8"/><rect x="804.08" y="409.56" width="1" height="1" fill="#a4a6a8"/><rect x="804.08" y="445.95" width="1" height="1" fill="#a4a6a8"/><rect x="804.08" y="482.33" width="1" height="1" fill="#a4a6a8"/><rect x="804.08" y="518.72" width="1" height="1" fill="#a4a6a8"/><rect x="804.08" y="555.11" width="1" height="1" fill="#a4a6a8"/><rect x="804.08" y="591.49" width="1" height="1" fill="#a4a6a8"/><rect x="804.08" y="627.88" width="1" height="1" fill="#a4a6a8"/><rect x="804.08" y="664.26" width="1" height="1" fill="#a4a6a8"/><rect x="804.08" y="700.64" width="1" height="1" fill="#a4a6a8"/><rect x="804.08" y="737.03" width="1" height="1" fill="#a4a6a8"/><rect x="840.47" y="82.10" width="1" height="1" fill="#a4a6a8"/><rect x="840.47" y="118.48" width="1" height="1" fill="#a4a6a8"/><rect x="840.47" y="154.87" width="1" height="1" fill="#a4a6a8"/><rect x="840.47" y="191.25" width="1" height="1" fill="#a4a6a8"/><rect x="840.47" y="227.64" width="1" height="1" fill="#a4a6a8"/><rect x="840.47" y="264.02" width="1" height="1" fill="#a4a6a8"/><rect x="840.47" y="300.41" width="1" height="1" fill="#a4a6a8"/><rect x="840.47" y="336.79" width="1" height="1" fill="#a4a6a8"/><rect x="840.47" y="373.18" width="1" height="1" fill="#a4a6a8"/><rect x="840.47" y="409.56" width="1" height="1" fill="#a4a6a8"/><rect x="840.47" y="445.95" width="1" height="1" fill="#a4a6a8"/><rect x="840.47" y="482.33" width="1" height="1" fill="#a4a6a8"/><rect x="840.47" y="518.72" width="1" height="1" fill="#a4a6a8"/><rect x="840.47" y="555.11" width="1" height="1" fill="#a4a6a8"/><rect x="840.47" y="591.49" width="1" height="1" fill="#a4a6a8"/><rect x="840.47" y="627.88" width="1" height="1" fill="#a4a6a8"/><rect x="840.47" y="664.26" width="1" height="1" fill="#a4a6a8"/><rect x="840.47" y="700.64" width="1" height="1" fill="#a4a6a8"/><rect x="840.47" y="737.03" width="1" height="1" fill="#a4a6a8"/><rect x="876.85" y="82.10" width="1" height="1" fill="#a4a6a8"/><rect x="876.85" y="118.48" width="1" height="1" fill="#a4a6a8"/><rect x="876.85" y="154.87" width="1" height="1" fill="#a4a6a8"/><rect x="876.85" y="191.25" width="1" height="1" fill="#a4a6a8"/><rect x="876.85" y="227.64" width="1" height="1" fill="#a4a6a8"/><rect x="876.85" y="264.02" width="1" height="1" fill="#a4a6a8"/><rect x="876.85" y="300.41" width="1" height="1" fill="#a4a6a8"/><rect x="876.85" y="336.79" width="1" height="1" fill="#a4a6a8"/><rect x="876.85" y="373.18" width="1" height="1" fill="#a4a6a8"/><rect x="876.85" y="409.56" width="1" height="1" fill="#a4a6a8"/><rect x="876.85" y="445.95" width="1" height="1" fill="#a4a6a8"/><rect x="876.85" y="482.33" width="1" height="1" fill="#a4a6a8"/><rect x="876.85" y="518.72" width="1" height="1" fill="#a4a6a8"/><rect x="876.85" y="555.11" width="1" height="1" fill="#a4a6a8"/><rect x="876.85" y="591.49" width="1" height="1" fill="#a4a6a8"/><rect x="876.85" y="627.88" width="1" height="1" fill="#a4a6a8"/><rect x="876.85" y="664.26" width="1" height="1" fill="#a4a6a8"/><rect x="876.85" y="700.64" width="1" height="1" fill="#a4a6a8"/><rect x="876.85" y="737.03" width="1" height="1" fill="#a4a6a8"/></g>
<rect x="3.1" y="73" width="1.1" height="680" fill="#d0d2cd"/>
<rect x="839.9" y="73" width="1.1" height="680" fill="#d0d2cd"/>
<circle cx="113.3" cy="119.6" r="38.9" fill="none" stroke="#ff26e2" stroke-width="1.1"/>
<circle cx="113.3" cy="119.6" r="35.6" fill="none" stroke="#5994dc" stroke-width="2.0"/>
<circle cx="113.3" cy="119.6" r="20.9" fill="none" stroke="#b23430" stroke-width="1.1"/>
<circle cx="113.3" cy="119.6" r="18.3" fill="#1ac4d2"/>
<text x="113.3" y="77.2" font-size="22.09" font-weight="200" text-anchor="middle" fill="#f2eda1" stroke="#f2eda1" stroke-width="0.8" stroke-linejoin="round" textLength="28.6" lengthAdjust="spacingAndGlyphs">H1</text>
<text x="113.3" y="176.6" font-size="22.09" font-weight="200" text-anchor="middle" fill="#a9a9a9" stroke="#a9a9a9" stroke-width="0.8" stroke-linejoin="round" textLength="144.6" lengthAdjust="spacingAndGlyphs">MountingHole</text>
<circle cx="731.8" cy="119.6" r="38.9" fill="none" stroke="#ff26e2" stroke-width="1.1"/>
<circle cx="731.8" cy="119.6" r="35.6" fill="none" stroke="#5994dc" stroke-width="2.0"/>
<circle cx="731.8" cy="119.6" r="20.9" fill="none" stroke="#b23430" stroke-width="1.1"/>
<circle cx="731.8" cy="119.6" r="18.3" fill="#1ac4d2"/>
<text x="731.8" y="77.2" font-size="22.09" font-weight="200" text-anchor="middle" fill="#f2eda1" stroke="#f2eda1" stroke-width="0.8" stroke-linejoin="round" textLength="28.6" lengthAdjust="spacingAndGlyphs">H2</text>
<text x="731.8" y="176.6" font-size="22.09" font-weight="200" text-anchor="middle" fill="#a9a9a9" stroke="#a9a9a9" stroke-width="0.8" stroke-linejoin="round" textLength="144.6" lengthAdjust="spacingAndGlyphs">MountingHole</text>
<circle cx="113.3" cy="701.7" r="38.9" fill="none" stroke="#ff26e2" stroke-width="1.1"/>
<circle cx="113.3" cy="701.7" r="35.6" fill="none" stroke="#5994dc" stroke-width="2.0"/>
<circle cx="113.3" cy="701.7" r="20.9" fill="none" stroke="#b23430" stroke-width="1.1"/>
<circle cx="113.3" cy="701.7" r="18.3" fill="#1ac4d2"/>
<text x="113.3" y="659.3" font-size="22.09" font-weight="200" text-anchor="middle" fill="#f2eda1" stroke="#f2eda1" stroke-width="0.8" stroke-linejoin="round" textLength="28.6" lengthAdjust="spacingAndGlyphs">H3</text>
<text x="113.3" y="758.7" font-size="22.09" font-weight="200" text-anchor="middle" fill="#a9a9a9" stroke="#a9a9a9" stroke-width="0.8" stroke-linejoin="round" textLength="144.6" lengthAdjust="spacingAndGlyphs">MountingHole</text>
<circle cx="731.8" cy="701.7" r="38.9" fill="none" stroke="#ff26e2" stroke-width="1.1"/>
<circle cx="731.8" cy="701.7" r="35.6" fill="none" stroke="#5994dc" stroke-width="2.0"/>
<circle cx="731.8" cy="701.7" r="20.9" fill="none" stroke="#b23430" stroke-width="1.1"/>
<circle cx="731.8" cy="701.7" r="18.3" fill="#1ac4d2"/>
<text x="731.8" y="659.3" font-size="22.09" font-weight="200" text-anchor="middle" fill="#f2eda1" stroke="#f2eda1" stroke-width="0.8" stroke-linejoin="round" textLength="28.6" lengthAdjust="spacingAndGlyphs">H4</text>
<text x="731.8" y="758.7" font-size="22.09" font-weight="200" text-anchor="middle" fill="#a9a9a9" stroke="#a9a9a9" stroke-width="0.8" stroke-linejoin="round" textLength="144.6" lengthAdjust="spacingAndGlyphs">MountingHole</text>
<rect x="82.3" y="331.2" width="132.5" height="122.4" fill="none" stroke="#ff26e2" stroke-width="1.1"/>
<rect x="89.3" y="337.6" width="118.9" height="109.0" fill="none" stroke="#b0b0b0" stroke-width="1.0"/>
<line x1="175.5" y1="352.0" x2="175.5" y2="431.0" stroke="#b0b0b0" stroke-width="1.0" stroke-linecap="round"/>
<rect x="88.1" y="336.4" width="121.3" height="111.4" fill="none" stroke="#f2eda1" stroke-width="1.8"/>
<path d="M105.2 336.4V354.3H209.4M177 336.4V354.3M105.2 447.8V430.3H209.4M177 447.8V430.3M163.4 354.3V430.3" fill="none" stroke="#f2eda1" stroke-width="1.8"/>
<path d="M163.4 369.2H116.5A4.7 4.7 0 0 0 116.5 378.6H163.4" fill="none" stroke="#f2eda1" stroke-width="1.8"/>
<path d="M163.4 405.6H116.5A4.7 4.7 0 0 0 116.5 415.0H163.4" fill="none" stroke="#f2eda1" stroke-width="1.8"/>
<path d="M172.6 405.8L165.6 410.3L172.6 414.8" fill="none" stroke="#b0b0b0" stroke-width="1"/>
<path d="M211.6 405.5L207 414H216.2Z" fill="none" stroke="#f2eda1" stroke-width="1.7" stroke-linejoin="round"/>
<text x="72.4" y="399.6" font-size="22.09" font-weight="200" text-anchor="middle" fill="#f2eda1" stroke="#f2eda1" stroke-width="0.8" stroke-linejoin="round" textLength="39.6" lengthAdjust="spacingAndGlyphs" transform="rotate(-90 72.4 391.5)">BT1</text>
<text x="148.3" y="399.6" font-size="22.09" font-weight="200" text-anchor="middle" fill="#a9a9a9" stroke="#a9a9a9" stroke-width="0.8" stroke-linejoin="round" textLength="39.6" lengthAdjust="spacingAndGlyphs" transform="rotate(-90 148.3 391.5)">BT1</text>
<text x="224.3" y="399.7" font-size="22.09" font-weight="200" text-anchor="middle" fill="#a9a9a9" stroke="#a9a9a9" stroke-width="0.8" stroke-linejoin="round" textLength="77.6" lengthAdjust="spacingAndGlyphs" transform="rotate(-90 224.3 391.6)">Battery</text>
<rect x="172.1" y="362.3" width="27.8" height="23.2" rx="11.6" fill="#c83434"/>
<rect x="169.2" y="359.4" width="33.6" height="29" rx="14.5" fill="none" stroke="#bd3335" stroke-width="1"/>
<rect x="172.1" y="398.4" width="27.8" height="23.8" rx="3.5" fill="#c83434"/>
<rect x="169.2" y="395.5" width="33.6" height="29.6" rx="6" fill="none" stroke="#bd3335" stroke-width="1"/>
<circle cx="186.0" cy="373.9" r="8.0" fill="#001023" stroke="#edc11f" stroke-width="1.7"/>
<circle cx="186.0" cy="410.3" r="8.0" fill="#001023" stroke="#edc11f" stroke-width="1.7"/>
<rect x="299.2" y="243.7" width="136.8" height="106.7" fill="none" stroke="#ff26e2" stroke-width="1.1"/>
<rect x="324.5" y="253.5" width="86.0" height="86.0" fill="none" stroke="#c4c4c4" stroke-width="0.9"/>
<circle cx="368.0" cy="296.7" r="28.9" fill="none" stroke="#c4c4c4" stroke-width="0.9"/>
<text x="368.0" y="305.7" font-size="22.09" font-weight="200" text-anchor="middle" fill="#a9a9a9" stroke="#a9a9a9" stroke-width="0.8" stroke-linejoin="round" textLength="44.6" lengthAdjust="spacingAndGlyphs">SW2</text>
<text x="374.8" y="367.9" font-size="22.09" font-weight="200" text-anchor="middle" fill="#a9a9a9" stroke="#a9a9a9" stroke-width="0.8" stroke-linejoin="round" textLength="92.6" lengthAdjust="spacingAndGlyphs">SW<tspan dy="-2.6">_</tspan><tspan dy="2.6">Push</tspan></text>
<line x1="335.7" y1="250.2" x2="400.2" y2="250.2" stroke="#f2eda1" stroke-width="2.0" stroke-linecap="round"/>
<line x1="335.7" y1="343.3" x2="400.2" y2="343.3" stroke="#f2eda1" stroke-width="2.0" stroke-linecap="round"/>
<line x1="317.8" y1="286.0" x2="317.8" y2="307.5" stroke="#f2eda1" stroke-width="2.0" stroke-linecap="round"/>
<line x1="418.1" y1="286.0" x2="418.1" y2="307.5" stroke="#f2eda1" stroke-width="2.0" stroke-linecap="round"/>
<text x="368.0" y="243.5" font-size="22.09" font-weight="200" text-anchor="middle" fill="#f2eda1" stroke="#f2eda1" stroke-width="0.8" stroke-linejoin="round" textLength="44.6" lengthAdjust="spacingAndGlyphs">SW2</text>
<circle cx="321.4" cy="264.5" r="14.3" fill="#c83434"/>
<circle cx="321.4" cy="264.5" r="17.2" fill="none" stroke="#bd3335" stroke-width="1"/>
<circle cx="321.4" cy="264.5" r="9.0" fill="#001023" stroke="#edc11f" stroke-width="2.3"/>
<circle cx="414.5" cy="264.5" r="14.3" fill="#c83434"/>
<circle cx="414.5" cy="264.5" r="17.2" fill="none" stroke="#bd3335" stroke-width="1"/>
<circle cx="414.5" cy="264.5" r="9.0" fill="#001023" stroke="#edc11f" stroke-width="2.3"/>
<circle cx="321.4" cy="329.0" r="14.3" fill="#c83434"/>
<circle cx="321.4" cy="329.0" r="17.2" fill="none" stroke="#bd3335" stroke-width="1"/>
<circle cx="321.4" cy="329.0" r="9.0" fill="#001023" stroke="#edc11f" stroke-width="2.3"/>
<circle cx="414.5" cy="329.0" r="14.3" fill="#c83434"/>
<circle cx="414.5" cy="329.0" r="17.2" fill="none" stroke="#bd3335" stroke-width="1"/>
<circle cx="414.5" cy="329.0" r="9.0" fill="#001023" stroke="#edc11f" stroke-width="2.3"/>
<rect x="299.2" y="498.4" width="136.8" height="106.7" fill="none" stroke="#ff26e2" stroke-width="1.1"/>
<rect x="324.5" y="508.5" width="86.0" height="86.0" fill="none" stroke="#c4c4c4" stroke-width="0.9"/>
<circle cx="368.0" cy="551.4" r="28.9" fill="none" stroke="#c4c4c4" stroke-width="0.9"/>
<text x="368.0" y="560.4" font-size="22.09" font-weight="200" text-anchor="middle" fill="#a9a9a9" stroke="#a9a9a9" stroke-width="0.8" stroke-linejoin="round" textLength="44.6" lengthAdjust="spacingAndGlyphs">SW1</text>
<text x="374.8" y="622.6" font-size="22.09" font-weight="200" text-anchor="middle" fill="#a9a9a9" stroke="#a9a9a9" stroke-width="0.8" stroke-linejoin="round" textLength="92.6" lengthAdjust="spacingAndGlyphs">SW<tspan dy="-2.6">_</tspan><tspan dy="2.6">Push</tspan></text>
<line x1="335.7" y1="504.9" x2="400.2" y2="504.9" stroke="#f2eda1" stroke-width="2.0" stroke-linecap="round"/>
<line x1="335.7" y1="598.0" x2="400.2" y2="598.0" stroke="#f2eda1" stroke-width="2.0" stroke-linecap="round"/>
<line x1="317.8" y1="540.7" x2="317.8" y2="562.2" stroke="#f2eda1" stroke-width="2.0" stroke-linecap="round"/>
<line x1="418.1" y1="540.7" x2="418.1" y2="562.2" stroke="#f2eda1" stroke-width="2.0" stroke-linecap="round"/>
<text x="368.0" y="498.2" font-size="22.09" font-weight="200" text-anchor="middle" fill="#f2eda1" stroke="#f2eda1" stroke-width="0.8" stroke-linejoin="round" textLength="44.6" lengthAdjust="spacingAndGlyphs">SW1</text>
<circle cx="321.4" cy="519.2" r="14.3" fill="#c83434"/>
<circle cx="321.4" cy="519.2" r="17.2" fill="none" stroke="#bd3335" stroke-width="1"/>
<circle cx="321.4" cy="519.2" r="9.0" fill="#001023" stroke="#edc11f" stroke-width="2.3"/>
<circle cx="414.5" cy="519.2" r="14.3" fill="#c83434"/>
<circle cx="414.5" cy="519.2" r="17.2" fill="none" stroke="#bd3335" stroke-width="1"/>
<circle cx="414.5" cy="519.2" r="9.0" fill="#001023" stroke="#edc11f" stroke-width="2.3"/>
<circle cx="321.4" cy="583.7" r="14.3" fill="#c83434"/>
<circle cx="321.4" cy="583.7" r="17.2" fill="none" stroke="#bd3335" stroke-width="1"/>
<circle cx="321.4" cy="583.7" r="9.0" fill="#001023" stroke="#edc11f" stroke-width="2.3"/>
<circle cx="414.5" cy="583.7" r="14.3" fill="#c83434"/>
<circle cx="414.5" cy="583.7" r="17.2" fill="none" stroke="#bd3335" stroke-width="1"/>
<circle cx="414.5" cy="583.7" r="9.0" fill="#001023" stroke="#edc11f" stroke-width="2.3"/>
<rect x="558.4" y="218.3" width="92.4" height="92.5" fill="none" stroke="#ff26e2" stroke-width="1.1"/>
<path d="M568.7 243.4 A41.5 41.5 0 1 1 568.7 285.6 Z" fill="none" stroke="#b0b0b0" stroke-width="1.0" stroke-linejoin="round" opacity="0.8"/>
<text x="604.5" y="270.9" font-size="16.05" font-weight="200" text-anchor="middle" fill="#a9a9a9" stroke="#a9a9a9" stroke-width="0.8" stroke-linejoin="round" textLength="23.4" lengthAdjust="spacingAndGlyphs" opacity="0.55">D1</text>
<text x="604.8" y="328.6" font-size="22.09" font-weight="200" text-anchor="middle" fill="#a9a9a9" stroke="#a9a9a9" stroke-width="0.8" stroke-linejoin="round" textLength="38.0" lengthAdjust="spacingAndGlyphs">LED</text>
<circle cx="604.5" cy="264.5" r="35.8" fill="none" stroke="#f2eda1" stroke-width="1.9"/>
<path d="M567.8 242.4 A42.8 42.8 0 1 1 567.8 286.6 Z" fill="none" stroke="#f2eda1" stroke-width="1.9" stroke-linejoin="round" opacity="1"/>
<text x="604.5" y="215.8" font-size="22.09" font-weight="200" text-anchor="middle" fill="#f2eda1" stroke="#f2eda1" stroke-width="0.8" stroke-linejoin="round" textLength="27.6" lengthAdjust="spacingAndGlyphs">D1</text>
<rect x="573.4" y="251.6" width="25.8" height="25.8" fill="#c83434"/>
<rect x="570.5" y="248.7" width="31.5" height="31.5" fill="none" stroke="#bd3335" stroke-width="1" rx="3"/>
<circle cx="586.3" cy="264.5" r="7.5" fill="#001023" stroke="#edc11f" stroke-width="2.3"/>
<circle cx="622.7" cy="264.5" r="12.9" fill="#c83434"/>
<circle cx="622.7" cy="264.5" r="15.8" fill="none" stroke="#bd3335" stroke-width="1"/>
<circle cx="622.7" cy="264.5" r="7.5" fill="#001023" stroke="#edc11f" stroke-width="2.3"/>
<rect x="558.4" y="327.5" width="92.4" height="92.5" fill="none" stroke="#ff26e2" stroke-width="1.1"/>
<path d="M568.7 352.6 A41.5 41.5 0 1 1 568.7 394.8 Z" fill="none" stroke="#b0b0b0" stroke-width="1.0" stroke-linejoin="round" opacity="0.8"/>
<text x="604.5" y="380.1" font-size="16.05" font-weight="200" text-anchor="middle" fill="#a9a9a9" stroke="#a9a9a9" stroke-width="0.8" stroke-linejoin="round" textLength="23.4" lengthAdjust="spacingAndGlyphs" opacity="0.55">D2</text>
<text x="604.8" y="437.8" font-size="22.09" font-weight="200" text-anchor="middle" fill="#a9a9a9" stroke="#a9a9a9" stroke-width="0.8" stroke-linejoin="round" textLength="38.0" lengthAdjust="spacingAndGlyphs">LED</text>
<circle cx="604.5" cy="373.7" r="35.8" fill="none" stroke="#f2eda1" stroke-width="1.9"/>
<path d="M567.8 351.6 A42.8 42.8 0 1 1 567.8 395.8 Z" fill="none" stroke="#f2eda1" stroke-width="1.9" stroke-linejoin="round" opacity="1"/>
<text x="604.5" y="325.0" font-size="22.09" font-weight="200" text-anchor="middle" fill="#f2eda1" stroke="#f2eda1" stroke-width="0.8" stroke-linejoin="round" textLength="27.6" lengthAdjust="spacingAndGlyphs">D2</text>
<rect x="573.4" y="360.8" width="25.8" height="25.8" fill="#c83434"/>
<rect x="570.5" y="357.9" width="31.5" height="31.5" fill="none" stroke="#bd3335" stroke-width="1" rx="3"/>
<circle cx="586.3" cy="373.7" r="7.5" fill="#001023" stroke="#edc11f" stroke-width="2.3"/>
<circle cx="622.7" cy="373.7" r="12.9" fill="#c83434"/>
<circle cx="622.7" cy="373.7" r="15.8" fill="none" stroke="#bd3335" stroke-width="1"/>
<circle cx="622.7" cy="373.7" r="7.5" fill="#001023" stroke="#edc11f" stroke-width="2.3"/>
<rect x="558.4" y="509.4" width="92.4" height="92.5" fill="none" stroke="#ff26e2" stroke-width="1.1"/>
<path d="M568.7 534.5 A41.5 41.5 0 1 1 568.7 576.7 Z" fill="none" stroke="#b0b0b0" stroke-width="1.0" stroke-linejoin="round" opacity="0.8"/>
<text x="604.5" y="562.0" font-size="16.05" font-weight="200" text-anchor="middle" fill="#a9a9a9" stroke="#a9a9a9" stroke-width="0.8" stroke-linejoin="round" textLength="23.4" lengthAdjust="spacingAndGlyphs" opacity="0.55">D3</text>
<text x="604.8" y="619.7" font-size="22.09" font-weight="200" text-anchor="middle" fill="#a9a9a9" stroke="#a9a9a9" stroke-width="0.8" stroke-linejoin="round" textLength="38.0" lengthAdjust="spacingAndGlyphs">LED</text>
<circle cx="604.5" cy="555.6" r="35.8" fill="none" stroke="#f2eda1" stroke-width="1.9"/>
<path d="M567.8 533.5 A42.8 42.8 0 1 1 567.8 577.7 Z" fill="none" stroke="#f2eda1" stroke-width="1.9" stroke-linejoin="round" opacity="1"/>
<text x="604.5" y="506.9" font-size="22.09" font-weight="200" text-anchor="middle" fill="#f2eda1" stroke="#f2eda1" stroke-width="0.8" stroke-linejoin="round" textLength="27.6" lengthAdjust="spacingAndGlyphs">D3</text>
<rect x="573.4" y="542.7" width="25.8" height="25.8" fill="#c83434"/>
<rect x="570.5" y="539.8" width="31.5" height="31.5" fill="none" stroke="#bd3335" stroke-width="1" rx="3"/>
<circle cx="586.3" cy="555.6" r="7.5" fill="#001023" stroke="#edc11f" stroke-width="2.3"/>
<circle cx="622.7" cy="555.6" r="12.9" fill="#c83434"/>
<circle cx="622.7" cy="555.6" r="15.8" fill="none" stroke="#bd3335" stroke-width="1"/>
<circle cx="622.7" cy="555.6" r="7.5" fill="#001023" stroke="#edc11f" stroke-width="2.3"/>
<line x1="186.0" y1="373.9" x2="586.3" y2="373.7" stroke="#0b677b" stroke-width="1.0" stroke-linecap="round"/>
<line x1="186.0" y1="410.3" x2="321.4" y2="264.5" stroke="#0b677b" stroke-width="1.0" stroke-linecap="round"/>
<line x1="186.0" y1="410.3" x2="321.4" y2="519.2" stroke="#0b677b" stroke-width="1.0" stroke-linecap="round"/>
<line x1="321.4" y1="264.5" x2="414.5" y2="264.5" stroke="#0b677b" stroke-width="1.0" stroke-linecap="round"/>
<line x1="321.4" y1="329.0" x2="414.5" y2="329.0" stroke="#0b677b" stroke-width="1.0" stroke-linecap="round"/>
<line x1="414.5" y1="329.0" x2="622.7" y2="555.6" stroke="#0b677b" stroke-width="1.0" stroke-linecap="round"/>
<line x1="321.4" y1="519.2" x2="414.5" y2="519.2" stroke="#0b677b" stroke-width="1.0" stroke-linecap="round"/>
<line x1="321.4" y1="583.7" x2="414.5" y2="583.7" stroke="#0b677b" stroke-width="1.0" stroke-linecap="round"/>
<line x1="414.5" y1="583.7" x2="622.7" y2="373.7" stroke="#0b677b" stroke-width="1.0" stroke-linecap="round"/>
<line x1="586.3" y1="264.5" x2="586.3" y2="555.6" stroke="#0b677b" stroke-width="1.0" stroke-linecap="round"/>
<line x1="622.7" y1="264.5" x2="622.7" y2="373.7" stroke="#0b677b" stroke-width="1.0" stroke-linecap="round"/>
<text x="321.4" y="262.0" font-size="12.6" font-weight="200" stroke="#e4e4e4" stroke-width="0.2" text-anchor="middle" fill="#e4e4e4" opacity="0.85" transform="translate(38.57 0) scale(0.88 1)">1</text>
<text x="321.4" y="270.1" font-size="3.8" text-anchor="middle" fill="#e0e0e0" opacity="0.7" textLength="23">Net-(BT1-+)</text>
<text x="414.5" y="262.0" font-size="12.6" font-weight="200" stroke="#e4e4e4" stroke-width="0.2" text-anchor="middle" fill="#e4e4e4" opacity="0.85" transform="translate(49.74 0) scale(0.88 1)">1</text>
<text x="414.5" y="270.1" font-size="3.8" text-anchor="middle" fill="#e0e0e0" opacity="0.7" textLength="23">Net-(BT1-+)</text>
<text x="321.4" y="326.5" font-size="12.6" font-weight="200" stroke="#e4e4e4" stroke-width="0.2" text-anchor="middle" fill="#e4e4e4" opacity="0.85" transform="translate(38.57 0) scale(0.88 1)">2</text>
<text x="321.4" y="334.6" font-size="3.8" text-anchor="middle" fill="#e0e0e0" opacity="0.7" textLength="23">Net-(D3-A)</text>
<text x="414.5" y="326.5" font-size="12.6" font-weight="200" stroke="#e4e4e4" stroke-width="0.2" text-anchor="middle" fill="#e4e4e4" opacity="0.85" transform="translate(49.74 0) scale(0.88 1)">2</text>
<text x="414.5" y="334.6" font-size="3.8" text-anchor="middle" fill="#e0e0e0" opacity="0.7" textLength="23">Net-(D3-A)</text>
<text x="321.4" y="516.7" font-size="12.6" font-weight="200" stroke="#e4e4e4" stroke-width="0.2" text-anchor="middle" fill="#e4e4e4" opacity="0.85" transform="translate(38.57 0) scale(0.88 1)">1</text>
<text x="321.4" y="524.8" font-size="3.8" text-anchor="middle" fill="#e0e0e0" opacity="0.7" textLength="23">Net-(BT1-+)</text>
<text x="414.5" y="516.7" font-size="12.6" font-weight="200" stroke="#e4e4e4" stroke-width="0.2" text-anchor="middle" fill="#e4e4e4" opacity="0.85" transform="translate(49.74 0) scale(0.88 1)">1</text>
<text x="414.5" y="524.8" font-size="3.8" text-anchor="middle" fill="#e0e0e0" opacity="0.7" textLength="23">Net-(BT1-+)</text>
<text x="321.4" y="581.2" font-size="12.6" font-weight="200" stroke="#e4e4e4" stroke-width="0.2" text-anchor="middle" fill="#e4e4e4" opacity="0.85" transform="translate(38.57 0) scale(0.88 1)">2</text>
<text x="321.4" y="589.3" font-size="3.8" text-anchor="middle" fill="#e0e0e0" opacity="0.7" textLength="23">Net-(D2-A)</text>
<text x="414.5" y="581.2" font-size="12.6" font-weight="200" stroke="#e4e4e4" stroke-width="0.2" text-anchor="middle" fill="#e4e4e4" opacity="0.85" transform="translate(49.74 0) scale(0.88 1)">2</text>
<text x="414.5" y="589.3" font-size="3.8" text-anchor="middle" fill="#e0e0e0" opacity="0.7" textLength="23">Net-(D2-A)</text>
<text x="586.3" y="262.5" font-size="11.5" font-weight="200" stroke="#e8e8e8" stroke-width="0.35" text-anchor="middle" fill="#e8e8e8" opacity="0.9">1</text>
<text x="586.3" y="273.8" font-size="8.6" font-weight="200" stroke="#e8e8e8" stroke-width="0.3" text-anchor="middle" fill="#e8e8e8" opacity="0.85">gnd</text><text x="622.7" y="262.0" font-size="12.6" font-weight="200" stroke="#e4e4e4" stroke-width="0.2" text-anchor="middle" fill="#e4e4e4" opacity="0.85" transform="translate(74.72 0) scale(0.88 1)">2</text>
<text x="622.7" y="270.1" font-size="3.8" text-anchor="middle" fill="#e0e0e0" opacity="0.7" textLength="23">Net-(D2-A)</text>
<text x="586.3" y="371.7" font-size="11.5" font-weight="200" stroke="#e8e8e8" stroke-width="0.35" text-anchor="middle" fill="#e8e8e8" opacity="0.9">1</text>
<text x="586.3" y="383.0" font-size="8.6" font-weight="200" stroke="#e8e8e8" stroke-width="0.3" text-anchor="middle" fill="#e8e8e8" opacity="0.85">gnd</text><text x="622.7" y="371.2" font-size="12.6" font-weight="200" stroke="#e4e4e4" stroke-width="0.2" text-anchor="middle" fill="#e4e4e4" opacity="0.85" transform="translate(74.72 0) scale(0.88 1)">2</text>
<text x="622.7" y="379.3" font-size="3.8" text-anchor="middle" fill="#e0e0e0" opacity="0.7" textLength="23">Net-(D2-A)</text>
<text x="586.3" y="553.6" font-size="11.5" font-weight="200" stroke="#e8e8e8" stroke-width="0.35" text-anchor="middle" fill="#e8e8e8" opacity="0.9">1</text>
<text x="586.3" y="564.9" font-size="8.6" font-weight="200" stroke="#e8e8e8" stroke-width="0.3" text-anchor="middle" fill="#e8e8e8" opacity="0.85">gnd</text><text x="622.7" y="553.1" font-size="12.6" font-weight="200" stroke="#e4e4e4" stroke-width="0.2" text-anchor="middle" fill="#e4e4e4" opacity="0.85" transform="translate(74.72 0) scale(0.88 1)">2</text>
<text x="622.7" y="561.2" font-size="3.8" text-anchor="middle" fill="#e0e0e0" opacity="0.7" textLength="23">Net-(D3-A)</text>
<text x="186.0" y="371.9" font-size="11.5" font-weight="200" stroke="#e8e8e8" stroke-width="0.35" text-anchor="middle" fill="#e8e8e8" opacity="0.9">2</text>
<text x="186.0" y="383.2" font-size="8.6" font-weight="200" stroke="#e8e8e8" stroke-width="0.3" text-anchor="middle" fill="#e8e8e8" opacity="0.85">gnd</text>
<text x="186.0" y="407.8" font-size="12.6" font-weight="200" stroke="#e4e4e4" stroke-width="0.2" text-anchor="middle" fill="#e4e4e4" opacity="0.85" transform="translate(22.32 0) scale(0.88 1)">1</text>
<text x="186.0" y="415.9" font-size="3.8" text-anchor="middle" fill="#e0e0e0" opacity="0.7" textLength="23">Net-(BT1-+)</text>
</svg></div>
<div class="abs" style="left:903px;top:73px;width:35px;height:676px;background:#eff0f1"></div>
<div class="abs" style="left:938px;top:73px;width:318px;height:676.5px;background:#dcdddf"></div>
<div class="abs" style="left:906px;top:78px;width:30px;height:30px;background:#c5e6f8;border:1px solid #3daee9"></div>
<svg class="ico" style="left:0;top:0" width="1256" height="769" viewBox="0 0 1256 769"><path d="M916.2 85V98.4L919.2 95.6L921.1 99.8Q922.3 100.8 923.5 99.5L921.7 95.1L925.6 94.4Z" fill="#4d4d4d"/><path d="M910.9 113.5L933 135.1M933 116.3L910.9 136.1" stroke="#4d4d4d" stroke-width="1.1"/><circle cx="921.3" cy="124.5" r="2.3" fill="#fff" stroke="#4d4d4d" stroke-width="1"/><path d="M910 145.5H932M910 346.5H932M910 739.5H932" stroke="#bfc0c1" stroke-width="1"/><path d="M909.6 157H932.4V174H909.6V168.4A2.8 2.8 0 0 0 909.6 162.8Z" fill="none" stroke="#4d4d4d" stroke-width="1.1"/><rect x="912" y="154.5" width="5" height="6" fill="#1d7fc9"/><rect x="912" y="171" width="5" height="6" fill="#1d7fc9"/><rect x="919" y="154.5" width="5" height="6" fill="#1d7fc9"/><rect x="919" y="171" width="5" height="6" fill="#1d7fc9"/><rect x="926" y="154.5" width="5" height="6" fill="#1d7fc9"/><rect x="926" y="171" width="5" height="6" fill="#1d7fc9"/><path d="M910.6 207.4L915.6 196.6H925L930.4 187.6" fill="none" stroke="#1d7fc9" stroke-width="1.7" stroke-linecap="round" stroke-linejoin="round"/><path d="M936 206V213H929Z" fill="#1b1b1b"/><path d="M910 229.5C910 234.5 914 236 914 231V226.5C914 221.5 918.4 221.5 918.4 226.5V231.5C918.4 236.5 922.8 236.5 922.8 231.5V226.5C922.8 221.5 927.2 221.5 927.2 226.5V229C927.2 232.5 930 233 932.5 230.6" fill="none" stroke="#1d7fc9" stroke-width="1.8" stroke-linecap="round"/><path d="M936 238V245H929Z" fill="#1b1b1b"/><circle cx="921" cy="262" r="5" fill="#fff" stroke="#f29410" stroke-width="4.4"/><path d="M917.5 284H931V304H911V294H917.5Z" fill="#1d7fc9"/><circle cx="925.4" cy="293" r="3.1" fill="#fff"/><circle cx="926" cy="293" r="1.5" fill="#4d4d4d"/><path d="M926 293H931" stroke="#4d4d4d" stroke-width="1.7"/><defs><pattern id="hat" width="4.2" height="4.2" patternUnits="userSpaceOnUse" patternTransform="rotate(-45)"><rect width="4.2" height="4.2" fill="#f4f4f4"/><rect width="2.1" height="4.2" fill="#4a4a4a"/></pattern><clipPath id="lc"><path d="M917.5 316H931V336H911V326H917.5Z"/></clipPath></defs><path d="M917.5 316.5H930.5V335.5H911.5V326.5H917.5Z" fill="url(#hat)" stroke="#4d4d4d" stroke-width="1"/><path d="M911.6 375.4L930.4 357.6" stroke="#4d4d4d" stroke-width="1.5" stroke-linecap="round"/><path d="M912 408A18.5 18.5 0 0 1 930.4 389.6" fill="none" stroke="#4d4d4d" stroke-width="1.5" stroke-linecap="round"/><rect x="911.6" y="422.6" width="18.8" height="16.8" fill="#c4c4c4" stroke="#4d4d4d" stroke-width="1.4"/><circle cx="921" cy="463" r="9" fill="#c4c4c4" stroke="#4d4d4d" stroke-width="1.4"/><path d="M912.2 486.4L930 489.6L929.2 501L913.4 504L919.6 496.2Z" fill="#c4c4c4" stroke="#4d4d4d" stroke-width="1.4" stroke-linejoin="round"/><path d="M915 536C913 528 920 528.5 922.5 526.5C926 524 928 522 927.4 517.6" fill="none" stroke="#4d4d4d" stroke-width="1.6" stroke-linecap="round"/><path d="M911 526.5H930" stroke="#1d7fc9" stroke-width="1.2"/><rect x="909.8" y="525.2" width="2.6" height="2.6" fill="#1d7fc9"/><rect x="928.6" y="525.2" width="2.6" height="2.6" fill="#1d7fc9"/><path d="M920.5 524.6L922.4 526.5L920.5 528.4L918.6 526.5Z" fill="#fff" stroke="#1d7fc9" stroke-width="0.7"/><rect x="910" y="548" width="21.6" height="21.6" rx="3.4" fill="#4d4d4d"/><circle cx="924.4" cy="553.8" r="2.3" fill="#fff"/><path d="M912 566.4L917.6 557.2L921.4 562.4L923.6 560L929.6 566.4Z" fill="#fff"/><path d="M913 581H929V583.8H922.7V600.4H919.3V583.8H913Z" fill="#4d4d4d"/><rect x="911.6" y="614.6" width="18.8" height="16.4" fill="#c4c4c4" stroke="#4d4d4d" stroke-width="1.4"/><path d="M915 619.4H924M915 622.8H927M915 626.2H923" stroke="#4d4d4d" stroke-width="1"/><rect x="909.4" y="643.6" width="23.4" height="22.6" fill="#fbfbfb" stroke="#4d4d4d" stroke-width="1"/><rect x="909.9" y="644.1" width="22.4" height="5.2" fill="#c2c2c2"/><path d="M909.4 649.6H932.8M909.4 655.2H932.8M909.4 660.8H932.8M917.2 643.6V666.2M925 643.6V666.2" stroke="#4d4d4d" stroke-width="1"/><path d="M912 678.4H932M921 695.6H932" stroke="#4d4d4d" stroke-width="1"/><path d="M929.3 681V693M927.6 683L929.3 680.6L931 683M927.6 691L929.3 693.4L931 691" fill="none" stroke="#4d4d4d" stroke-width="0.8"/><circle cx="912.4" cy="678.4" r="2.9" fill="#1d7fc9"/><circle cx="920.8" cy="695.6" r="2.9" fill="#1d7fc9"/><path d="M936 695V702H929Z" fill="#1b1b1b"/><path d="M913 708.4V722.6L916.6 719.6L919.6 725L922.4 723.6L919.6 718.4L924.4 718Z" fill="#4d4d4d"/><circle cx="926" cy="724" r="6.8" fill="#c4203c"/><path d="M923.4 721.4L928.6 726.6M928.6 721.4L923.4 726.6" stroke="#fff" stroke-width="1.9"/></svg>
<div class="abs" style="left:943px;top:73px;width:313px;height:17px;background:#b9bbba"></div>
<div class="lbl" style="left:945.54px;top:72.19px;font-size:11px;line-height:16px;letter-spacing:0.170px;">Apariencia</div>
<div class="abs" style="left:943px;top:95px;width:313px;height:347px;background:#eff0f1"></div>
<div class="abs" style="left:992px;top:95px;width:115px;height:32px;background:#c5c6c7"></div>
<div class="abs" style="left:992px;top:127px;width:264px;height:1px;background:#bbbcbd"></div>
<div class="abs" style="left:944px;top:95px;width:48px;height:3px;background:#3daee9;border-radius:2px 2px 0 0"></div>
<div class="abs" style="left:943px;top:96px;width:1px;height:346px;background:#d0d1d2"></div>
<div class="lbl" style="left:949.52px;top:104.70px;font-size:13px;line-height:16px;letter-spacing:-0.087px;">Capas</div>
<div class="lbl" style="left:999.42px;top:104.70px;font-size:13px;line-height:16px;letter-spacing:0.703px;">Objetos</div>
<div class="lbl" style="left:1061.72px;top:104.70px;font-size:13px;line-height:16px;letter-spacing:0.363px;">Redes</div>
<div class="abs" style="left:944px;top:128px;width:312px;height:19px;background:#dfe0e1"></div>
<div class="abs" style="left:944px;top:128px;width:312px;height:314px;overflow:hidden">
<div class="abs" style="left:15px;top:3px;width:16px;height:14px;background:#c83434;box-shadow:0 0 0 1px #f7f7f8"></div>
<svg class="ico" style="left:37px;top:2px" width="16" height="16" viewBox="0 0 16 16"><circle cx="8" cy="8" r="8" fill="#4f4f4f"/><path d="M1.6 8C4.2 3.5 11.8 3.5 14.4 8C11.8 12.5 4.2 12.5 1.6 8Z" fill="#fff"/><rect x="6.3" y="6.3" width="3.4" height="3.4" rx="0.9" fill="#fff" stroke="#6a6a6a" stroke-width="1"/></svg>
<div class="lbl" style="left:57.88px;top:2.94px;font-size:12px;line-height:16px;letter-spacing:0.044px;">F.Cu</div>
<div class="abs" style="left:15px;top:22px;width:16px;height:14px;background:#4d7fc4;box-shadow:0 0 0 1px #f7f7f8"></div>
<svg class="ico" style="left:37px;top:21px" width="16" height="16" viewBox="0 0 16 16"><circle cx="8" cy="8" r="8" fill="#4f4f4f"/><path d="M1.6 8C4.2 3.5 11.8 3.5 14.4 8C11.8 12.5 4.2 12.5 1.6 8Z" fill="#fff"/><rect x="6.3" y="6.3" width="3.4" height="3.4" rx="0.9" fill="#fff" stroke="#6a6a6a" stroke-width="1"/></svg>
<div class="lbl" style="left:57.88px;top:21.94px;font-size:12px;line-height:16px;letter-spacing:-0.056px;">B.Cu</div>
<div class="abs" style="left:15px;top:41px;width:16px;height:14px;background:#840084;box-shadow:0 0 0 1px #f7f7f8"></div>
<svg class="ico" style="left:37px;top:40px" width="16" height="16" viewBox="0 0 16 16"><circle cx="8" cy="8" r="8" fill="#4f4f4f"/><path d="M1.6 8C4.2 3.5 11.8 3.5 14.4 8C11.8 12.5 4.2 12.5 1.6 8Z" fill="#fff"/><rect x="6.3" y="6.3" width="3.4" height="3.4" rx="0.9" fill="#fff" stroke="#6a6a6a" stroke-width="1"/></svg>
<div class="lbl" style="left:57.88px;top:40.94px;font-size:12px;line-height:16px;letter-spacing:0.169px;">F.Adhesive</div>
<div class="abs" style="left:15px;top:60px;width:16px;height:14px;background:#000084;box-shadow:0 0 0 1px #f7f7f8"></div>
<svg class="ico" style="left:37px;top:59px" width="16" height="16" viewBox="0 0 16 16"><circle cx="8" cy="8" r="8" fill="#4f4f4f"/><path d="M1.6 8C4.2 3.5 11.8 3.5 14.4 8C11.8 12.5 4.2 12.5 1.6 8Z" fill="#fff"/><rect x="6.3" y="6.3" width="3.4" height="3.4" rx="0.9" fill="#fff" stroke="#6a6a6a" stroke-width="1"/></svg>
<div class="lbl" style="left:57.88px;top:59.94px;font-size:12px;line-height:16px;letter-spacing:0.124px;">B.Adhesive</div>
<div class="abs" style="left:15px;top:79px;width:16px;height:14px;background:#a0908b;box-shadow:0 0 0 1px #f7f7f8"></div>
<svg class="ico" style="left:37px;top:78px" width="16" height="16" viewBox="0 0 16 16"><circle cx="8" cy="8" r="8" fill="#4f4f4f"/><path d="M1.6 8C4.2 3.5 11.8 3.5 14.4 8C11.8 12.5 4.2 12.5 1.6 8Z" fill="#fff"/><rect x="6.3" y="6.3" width="3.4" height="3.4" rx="0.9" fill="#fff" stroke="#6a6a6a" stroke-width="1"/></svg>
<div class="lbl" style="left:57.88px;top:78.94px;font-size:12px;line-height:16px;letter-spacing:-0.035px;">F.Paste</div>
<div class="abs" style="left:15px;top:98px;width:16px;height:14px;background:#00aeae;box-shadow:0 0 0 1px #f7f7f8"></div>
<svg class="ico" style="left:37px;top:97px" width="16" height="16" viewBox="0 0 16 16"><circle cx="8" cy="8" r="8" fill="#4f4f4f"/><path d="M1.6 8C4.2 3.5 11.8 3.5 14.4 8C11.8 12.5 4.2 12.5 1.6 8Z" fill="#fff"/><rect x="6.3" y="6.3" width="3.4" height="3.4" rx="0.9" fill="#fff" stroke="#6a6a6a" stroke-width="1"/></svg>
<div class="lbl" style="left:57.88px;top:97.94px;font-size:12px;line-height:16px;letter-spacing:-0.019px;">B.Paste</div>
<div class="abs" style="left:15px;top:117px;width:16px;height:14px;background:#f2eda1;box-shadow:0 0 0 1px #f7f7f8"></div>
<svg class="ico" style="left:37px;top:116px" width="16" height="16" viewBox="0 0 16 16"><circle cx="8" cy="8" r="8" fill="#4f4f4f"/><path d="M1.6 8C4.2 3.5 11.8 3.5 14.4 8C11.8 12.5 4.2 12.5 1.6 8Z" fill="#fff"/><rect x="6.3" y="6.3" width="3.4" height="3.4" rx="0.9" fill="#fff" stroke="#6a6a6a" stroke-width="1"/></svg>
<div class="lbl" style="left:57.88px;top:116.94px;font-size:12px;line-height:16px;letter-spacing:0.194px;">F.Silkscreen</div>
<div class="abs" style="left:15px;top:136px;width:16px;height:14px;background:#e8b2a7;box-shadow:0 0 0 1px #f7f7f8"></div>
<svg class="ico" style="left:37px;top:135px" width="16" height="16" viewBox="0 0 16 16"><circle cx="8" cy="8" r="8" fill="#4f4f4f"/><path d="M1.6 8C4.2 3.5 11.8 3.5 14.4 8C11.8 12.5 4.2 12.5 1.6 8Z" fill="#fff"/><rect x="6.3" y="6.3" width="3.4" height="3.4" rx="0.9" fill="#fff" stroke="#6a6a6a" stroke-width="1"/></svg>
<div class="lbl" style="left:57.88px;top:135.94px;font-size:12px;line-height:16px;letter-spacing:0.165px;">B.Silkscreen</div>
<div class="abs" style="left:15px;top:155px;width:16px;height:14px;background:#572a6c;background-image:conic-gradient(#572a6c 25%,#6b3d80 0 50%,#572a6c 0 75%,#6b3d80 0);background-size:12px 14px;box-shadow:0 0 0 1px #f7f7f8"></div>
<svg class="ico" style="left:37px;top:154px" width="16" height="16" viewBox="0 0 16 16"><circle cx="8" cy="8" r="8" fill="#4f4f4f"/><path d="M1.6 8C4.2 3.5 11.8 3.5 14.4 8C11.8 12.5 4.2 12.5 1.6 8Z" fill="#fff"/><rect x="6.3" y="6.3" width="3.4" height="3.4" rx="0.9" fill="#fff" stroke="#6a6a6a" stroke-width="1"/></svg>
<div class="lbl" style="left:57.88px;top:154.94px;font-size:12px;line-height:16px;letter-spacing:0.401px;">F.Mask</div>
<div class="abs" style="left:15px;top:174px;width:16px;height:14px;background:#05665f;background-image:conic-gradient(#05665f 25%,#1a7a74 0 50%,#05665f 0 75%,#1a7a74 0);background-size:12px 14px;box-shadow:0 0 0 1px #f7f7f8"></div>
<svg class="ico" style="left:37px;top:173px" width="16" height="16" viewBox="0 0 16 16"><circle cx="8" cy="8" r="8" fill="#4f4f4f"/><path d="M1.6 8C4.2 3.5 11.8 3.5 14.4 8C11.8 12.5 4.2 12.5 1.6 8Z" fill="#fff"/><rect x="6.3" y="6.3" width="3.4" height="3.4" rx="0.9" fill="#fff" stroke="#6a6a6a" stroke-width="1"/></svg>
<div class="lbl" style="left:57.88px;top:173.94px;font-size:12px;line-height:16px;letter-spacing:0.381px;">B.Mask</div>
<div class="abs" style="left:15px;top:193px;width:16px;height:14px;background:#c2c2c2;box-shadow:0 0 0 1px #f7f7f8"></div>
<svg class="ico" style="left:37px;top:192px" width="16" height="16" viewBox="0 0 16 16"><circle cx="8" cy="8" r="8" fill="#4f4f4f"/><path d="M1.6 8C4.2 3.5 11.8 3.5 14.4 8C11.8 12.5 4.2 12.5 1.6 8Z" fill="#fff"/><rect x="6.3" y="6.3" width="3.4" height="3.4" rx="0.9" fill="#fff" stroke="#6a6a6a" stroke-width="1"/></svg>
<div class="lbl" style="left:57.88px;top:192.94px;font-size:12px;line-height:16px;letter-spacing:0.282px;">User.Drawings</div>
<div class="abs" style="left:15px;top:212px;width:16px;height:14px;background:#5994dc;box-shadow:0 0 0 1px #f7f7f8"></div>
<svg class="ico" style="left:37px;top:211px" width="16" height="16" viewBox="0 0 16 16"><circle cx="8" cy="8" r="8" fill="#4f4f4f"/><path d="M1.6 8C4.2 3.5 11.8 3.5 14.4 8C11.8 12.5 4.2 12.5 1.6 8Z" fill="#fff"/><rect x="6.3" y="6.3" width="3.4" height="3.4" rx="0.9" fill="#fff" stroke="#6a6a6a" stroke-width="1"/></svg>
<div class="lbl" style="left:57.88px;top:211.94px;font-size:12px;line-height:16px;letter-spacing:0.257px;">User.Comments</div>
<div class="abs" style="left:15px;top:231px;width:16px;height:14px;background:#b4dbd2;box-shadow:0 0 0 1px #f7f7f8"></div>
<svg class="ico" style="left:37px;top:230px" width="16" height="16" viewBox="0 0 16 16"><circle cx="8" cy="8" r="8" fill="#4f4f4f"/><path d="M1.6 8C4.2 3.5 11.8 3.5 14.4 8C11.8 12.5 4.2 12.5 1.6 8Z" fill="#fff"/><rect x="6.3" y="6.3" width="3.4" height="3.4" rx="0.9" fill="#fff" stroke="#6a6a6a" stroke-width="1"/></svg>
<div class="lbl" style="left:57.88px;top:230.94px;font-size:12px;line-height:16px;letter-spacing:-0.092px;">User.Eco1</div>
<div class="abs" style="left:15px;top:250px;width:16px;height:14px;background:#d8c852;box-shadow:0 0 0 1px #f7f7f8"></div>
<svg class="ico" style="left:37px;top:249px" width="16" height="16" viewBox="0 0 16 16"><circle cx="8" cy="8" r="8" fill="#4f4f4f"/><path d="M1.6 8C4.2 3.5 11.8 3.5 14.4 8C11.8 12.5 4.2 12.5 1.6 8Z" fill="#fff"/><rect x="6.3" y="6.3" width="3.4" height="3.4" rx="0.9" fill="#fff" stroke="#6a6a6a" stroke-width="1"/></svg>
<div class="lbl" style="left:57.88px;top:249.94px;font-size:12px;line-height:16px;letter-spacing:0.008px;">User.Eco2</div>
<div class="abs" style="left:15px;top:269px;width:16px;height:14px;background:#d0d2cd;box-shadow:0 0 0 1px #f7f7f8"></div>
<svg class="ico" style="left:37px;top:268px" width="16" height="16" viewBox="0 0 16 16"><circle cx="8" cy="8" r="8" fill="#4f4f4f"/><path d="M1.6 8C4.2 3.5 11.8 3.5 14.4 8C11.8 12.5 4.2 12.5 1.6 8Z" fill="#fff"/><rect x="6.3" y="6.3" width="3.4" height="3.4" rx="0.9" fill="#fff" stroke="#6a6a6a" stroke-width="1"/></svg>
<div class="lbl" style="left:57.88px;top:268.94px;font-size:12px;line-height:16px;letter-spacing:0.009px;">Edge.Cuts</div>
<div class="abs" style="left:15px;top:288px;width:16px;height:14px;background:#ff26e2;box-shadow:0 0 0 1px #f7f7f8"></div>
<svg class="ico" style="left:37px;top:287px" width="16" height="16" viewBox="0 0 16 16"><circle cx="8" cy="8" r="8" fill="#4f4f4f"/><path d="M1.6 8C4.2 3.5 11.8 3.5 14.4 8C11.8 12.5 4.2 12.5 1.6 8Z" fill="#fff"/><rect x="6.3" y="6.3" width="3.4" height="3.4" rx="0.9" fill="#fff" stroke="#6a6a6a" stroke-width="1"/></svg>
<div class="lbl" style="left:57.88px;top:287.94px;font-size:12px;line-height:16px;letter-spacing:0.786px;">Margin</div>
<div class="abs" style="left:15px;top:307px;width:16px;height:14px;background:#ff26e2;box-shadow:0 0 0 1px #f7f7f8"></div>
<svg class="ico" style="left:37px;top:306px" width="16" height="16" viewBox="0 0 16 16"><circle cx="8" cy="8" r="8" fill="#4f4f4f"/><path d="M1.6 8C4.2 3.5 11.8 3.5 14.4 8C11.8 12.5 4.2 12.5 1.6 8Z" fill="#fff"/><rect x="6.3" y="6.3" width="3.4" height="3.4" rx="0.9" fill="#fff" stroke="#6a6a6a" stroke-width="1"/></svg>
<div class="lbl" style="left:57.88px;top:306.94px;font-size:12px;line-height:16px;letter-spacing:0.369px;">F.Courtyard</div>
</div>
<svg class="ico" style="left:948px;top:133px" width="6" height="9" viewBox="0 0 6 9"><path d="M0.2 0V9L5 4.5Z" fill="#3a3aff"/></svg>
<div class="abs" style="left:943px;top:466px;width:313px;height:1px;background:#c6c7c8"></div>
<svg class="ico" style="left:955px;top:449px" width="7" height="11" viewBox="0 0 7 11"><path d="M1 0.6V10.4L6 5.5Z" fill="#222"/></svg>
<div class="lbl" style="left:963.62px;top:447.60px;font-size:13px;line-height:16px;letter-spacing:-0.305px;">Opciones de visualización de capas</div>
<div class="lbl" style="left:949.32px;top:478.40px;font-size:13px;line-height:16px;letter-spacing:-0.190px;">Preconfiguraciones (Ctrl+Tab):</div>
<div class="combo" style="left:950px;top:497px;width:330px;height:33px"></div><div class="lbl" style="left:958.72px;top:507.50px;font-size:13px;line-height:16px;letter-spacing:0.065px;">---</div>
<div class="lbl" style="left:949.32px;top:535.00px;font-size:13px;line-height:16px;letter-spacing:-0.311px;">Vistas (Shift+Tab):</div>
<div class="combo" style="left:950px;top:553px;width:330px;height:33px"></div><div class="lbl" style="left:958.72px;top:563.50px;font-size:13px;line-height:16px;letter-spacing:0.065px;">---</div>
<svg class="ico" style="left:1254px;top:507px" width="2" height="70" viewBox="0 0 2 70"><path d="M0.6 3.2L5 7.6M0.6 59.4L5 63.8" stroke="#4a4d50" stroke-width="1.3"/></svg>
<div class="abs" style="left:943px;top:442px;width:1px;height:150px;background:#eceded"></div><div class="abs" style="left:943px;top:614px;width:1px;height:135px;background:#eceded"></div>
<div class="abs" style="left:943px;top:597px;width:313px;height:17px;background:#b9bbba"></div>
<div class="lbl" style="left:945.54px;top:596.29px;font-size:11px;line-height:16px;letter-spacing:0.175px;">Filtro de selección</div>
<div class="abs" style="left:952px;top:621px;width:16px;height:16px;border-radius:3px;background:#cfdfe8;border:1px solid #93cee9"></div>
<svg class="ico" style="left:952px;top:621px" width="16" height="16" viewBox="0 0 16 16"><path d="M3.6 8.2L6.8 11.2L12.6 5" fill="none" stroke="#232629" stroke-width="1.7"/></svg>
<div class="lbl" style="left:971.62px;top:621.90px;font-size:13px;line-height:16px;letter-spacing:-0.244px;">Todos los elementos</div>
<div class="abs" style="left:1099px;top:621px;width:16px;height:16px;border-radius:3px;background:#f4f5f5;border:1px solid #bfc1c3"></div>
<div class="lbl" style="left:1118.62px;top:621.90px;font-size:13px;line-height:16px;letter-spacing:-0.265px;">Elementos bloqueados</div>
<div class="abs" style="left:952px;top:642px;width:16px;height:16px;border-radius:3px;background:#cfdfe8;border:1px solid #93cee9"></div>
<svg class="ico" style="left:952px;top:642px" width="16" height="16" viewBox="0 0 16 16"><path d="M3.6 8.2L6.8 11.2L12.6 5" fill="none" stroke="#232629" stroke-width="1.7"/></svg>
<div class="lbl" style="left:971.62px;top:642.90px;font-size:13px;line-height:16px;letter-spacing:-0.188px;">Huellas</div>
<div class="abs" style="left:1099px;top:642px;width:16px;height:16px;border-radius:3px;background:#cfdfe8;border:1px solid #93cee9"></div>
<svg class="ico" style="left:1099px;top:642px" width="16" height="16" viewBox="0 0 16 16"><path d="M3.6 8.2L6.8 11.2L12.6 5" fill="none" stroke="#232629" stroke-width="1.7"/></svg>
<div class="lbl" style="left:1118.62px;top:642.90px;font-size:13px;line-height:16px;letter-spacing:-0.062px;">Texto</div>
<div class="abs" style="left:952px;top:663px;width:16px;height:16px;border-radius:3px;background:#cfdfe8;border:1px solid #93cee9"></div>
<svg class="ico" style="left:952px;top:663px" width="16" height="16" viewBox="0 0 16 16"><path d="M3.6 8.2L6.8 11.2L12.6 5" fill="none" stroke="#232629" stroke-width="1.7"/></svg>
<div class="lbl" style="left:971.62px;top:663.90px;font-size:13px;line-height:16px;letter-spacing:-0.395px;">Pistas</div>
<div class="abs" style="left:1099px;top:663px;width:16px;height:16px;border-radius:3px;background:#cfdfe8;border:1px solid #93cee9"></div>
<svg class="ico" style="left:1099px;top:663px" width="16" height="16" viewBox="0 0 16 16"><path d="M3.6 8.2L6.8 11.2L12.6 5" fill="none" stroke="#232629" stroke-width="1.7"/></svg>
<div class="lbl" style="left:1118.62px;top:663.90px;font-size:13px;line-height:16px;letter-spacing:-0.895px;">Vías</div>
<div class="abs" style="left:952px;top:684px;width:16px;height:16px;border-radius:3px;background:#cfdfe8;border:1px solid #93cee9"></div>
<svg class="ico" style="left:952px;top:684px" width="16" height="16" viewBox="0 0 16 16"><path d="M3.6 8.2L6.8 11.2L12.6 5" fill="none" stroke="#232629" stroke-width="1.7"/></svg>
<div class="lbl" style="left:971.62px;top:684.90px;font-size:13px;line-height:16px;letter-spacing:-0.737px;">Pads</div>
<div class="abs" style="left:1099px;top:684px;width:16px;height:16px;border-radius:3px;background:#cfdfe8;border:1px solid #93cee9"></div>
<svg class="ico" style="left:1099px;top:684px" width="16" height="16" viewBox="0 0 16 16"><path d="M3.6 8.2L6.8 11.2L12.6 5" fill="none" stroke="#232629" stroke-width="1.7"/></svg>
<div class="lbl" style="left:1118.62px;top:684.90px;font-size:13px;line-height:16px;letter-spacing:-0.168px;">Gráficos</div>
<div class="abs" style="left:952px;top:705px;width:16px;height:16px;border-radius:3px;background:#cfdfe8;border:1px solid #93cee9"></div>
<svg class="ico" style="left:952px;top:705px" width="16" height="16" viewBox="0 0 16 16"><path d="M3.6 8.2L6.8 11.2L12.6 5" fill="none" stroke="#232629" stroke-width="1.7"/></svg>
<div class="lbl" style="left:971.62px;top:705.90px;font-size:13px;line-height:16px;letter-spacing:-0.428px;">Zonas</div>
<div class="abs" style="left:1099px;top:705px;width:16px;height:16px;border-radius:3px;background:#cfdfe8;border:1px solid #93cee9"></div>
<svg class="ico" style="left:1099px;top:705px" width="16" height="16" viewBox="0 0 16 16"><path d="M3.6 8.2L6.8 11.2L12.6 5" fill="none" stroke="#232629" stroke-width="1.7"/></svg>
<div class="lbl" style="left:1118.62px;top:705.90px;font-size:13px;line-height:16px;letter-spacing:-0.428px;">Áreas de Reglas</div>
<div class="abs" style="left:952px;top:726px;width:16px;height:16px;border-radius:3px;background:#cfdfe8;border:1px solid #93cee9"></div>
<svg class="ico" style="left:952px;top:726px" width="16" height="16" viewBox="0 0 16 16"><path d="M3.6 8.2L6.8 11.2L12.6 5" fill="none" stroke="#232629" stroke-width="1.7"/></svg>
<div class="lbl" style="left:971.62px;top:726.90px;font-size:13px;line-height:16px;letter-spacing:-0.335px;">Cotas</div>
<div class="abs" style="left:1099px;top:726px;width:16px;height:16px;border-radius:3px;background:#cfdfe8;border:1px solid #93cee9"></div>
<svg class="ico" style="left:1099px;top:726px" width="16" height="16" viewBox="0 0 16 16"><path d="M3.6 8.2L6.8 11.2L12.6 5" fill="none" stroke="#232629" stroke-width="1.7"/></svg>
<div class="lbl" style="left:1118.62px;top:726.90px;font-size:13px;line-height:16px;letter-spacing:-0.146px;">Otros elementos</div>
<div class="abs" style="left:0;top:749px;width:1256px;height:20px;background:#eff0f1"></div>
<div class="lbl" style="left:4.42px;top:752.60px;font-size:13px;line-height:16px;letter-spacing:-0.295px;">Vías</div>
<div class="lbl" style="left:58.52px;top:752.60px;font-size:13px;line-height:16px;letter-spacing:0.425px;">Segmentos de pista</div>
<div class="lbl" style="left:209.92px;top:752.60px;font-size:13px;line-height:16px;letter-spacing:0.263px;">Redes</div>
<div class="lbl" style="left:277.82px;top:752.60px;font-size:13px;line-height:16px;letter-spacing:0.544px;">Sin enrutar</div>
<div class="abs" style="left:1208px;top:762.5px;width:60px;height:20px;background:#f7f8f8;border:1px solid #dcdddd;border-radius:4px"></div>
<svg class="ico" style="left:0;top:0" width="1256" height="769" viewBox="0 0 1256 769"><path d="M752.3 314.8L939.5 162.3L945.0 169.0L959.2 142.4L930.3 151.0L935.8 157.6L748.5 310.2Z" fill="#ff0000"/></svg>
</body></html>
